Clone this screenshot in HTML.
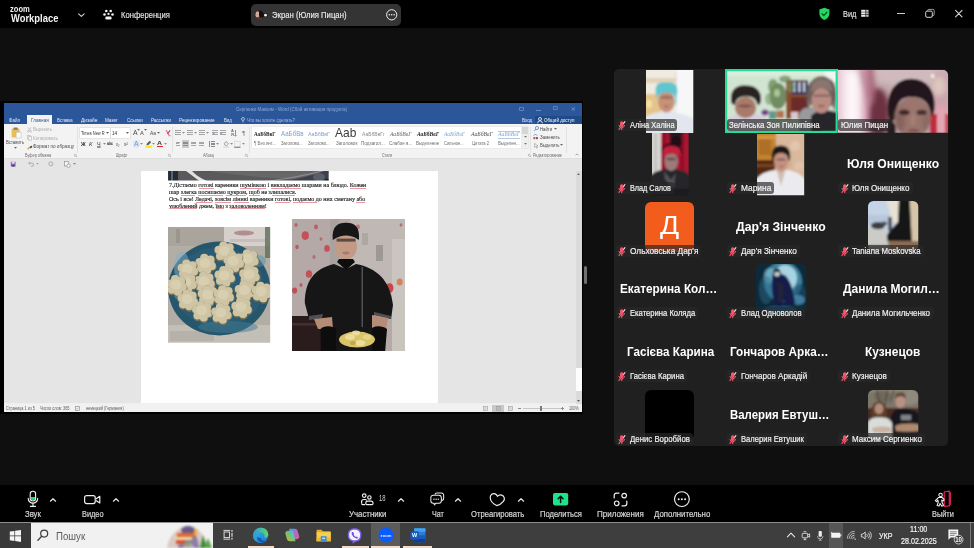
<!DOCTYPE html>
<html lang="ru">
<head>
<meta charset="utf-8">
<title>Zoom Workplace</title>
<style>
*{box-sizing:border-box;margin:0;padding:0}
html,body{width:974px;height:548px;overflow:hidden;background:#0f0f0f;font-family:"Liberation Sans","DejaVu Sans",sans-serif;color:#fff}
#root{position:relative;width:974px;height:548px;overflow:hidden;background:#0f0f0f;will-change:transform;filter:blur(.3px)}
.b{position:absolute;display:block}
svg.b{overflow:visible}
.x{position:absolute;white-space:nowrap;transform-origin:0 50%;display:block}
</style>
</head>
<body>
<div id="root">
<!-- top bar -->
<div class="b" style="left:0px;top:0px;width:974px;height:28px;background:#000;"></div>
<span class="x" style="left:10.2px;top:5px;font-size:9px;line-height:9px;color:#f2f2f2;font-weight:bold;transform:translateY(0.1px) rotate(.02deg) scaleX(0.84);">zoom</span>
<span class="x" style="left:10.5px;top:14px;font-size:10px;line-height:10px;color:#f4f4f4;font-weight:bold;transform:rotate(.02deg) scaleX(0.94);">Workplace</span>
<svg class="b" style="left:77px;top:11px" width="9" height="8" viewBox="0 0 9 8"><path d="M1.6 2.8 L4.4 5.4 L7.2 2.8" fill="none" stroke="#cfcfcf" stroke-width="1.1" stroke-linecap="round" stroke-linejoin="round"/></svg>
<svg class="b" style="left:102px;top:8px" width="14" height="13" viewBox="0 0 14 13"><g fill="#f2f2f2"><circle cx="4.3" cy="3" r="1.3"/><circle cx="8.7" cy="3" r="1.3"/><circle cx="2.5" cy="6.5" r="1.3"/><circle cx="10.5" cy="6.5" r="1.3"/><circle cx="6.5" cy="5.9" r="1.15"/><rect x="3.3" y="8.6" width="6.3" height="3" rx="1.4"/></g></svg>
<span class="x" style="left:120.6px;top:11px;font-size:9.2px;line-height:9.2px;color:#e4e4e4;transform:translateY(0.4px) rotate(.02deg) scaleX(0.83);-webkit-text-stroke:.15px #e4e4e4;">Конференция</span>
<div class="b" style="left:251px;top:4px;width:150px;height:22px;background:#343434;border-radius:5px;"></div>
<svg class="b" style="left:254px;top:9px" width="16" height="12" viewBox="0 0 16 12"><defs><clipPath id="avc"><circle cx="5.4" cy="6" r="4.5"/></clipPath></defs><g clip-path="url(#avc)" filter="url(#bl2)"><rect width="11" height="12" fill="#2a1a1c"/><ellipse cx="3.6" cy="5.4" rx="2.2" ry="3.2" fill="#d2aa9a"/><ellipse cx="7.6" cy="5" rx="2.6" ry="4.4" fill="#120c0c"/><rect x="1.6" y="8.4" width="7" height="4" fill="#5c3038"/></g><circle cx="11.5" cy="6.2" r="2.1" fill="#1a1a1a"/><circle cx="11.5" cy="6.2" r="1.4" fill="#f0f0f0"/></svg>
<span class="x" style="left:272.3px;top:11px;font-size:9.2px;line-height:9.2px;color:#ededed;transform:rotate(.02deg) scaleX(0.84);-webkit-text-stroke:.15px #ededed;">Экран (Юлия Пицан)</span>
<svg class="b" style="left:385px;top:8px" width="14" height="14" viewBox="0 0 14 14"><circle cx="6.7" cy="6.8" r="5.1" fill="none" stroke="#f0f0f0" stroke-width="1"/><g fill="#f0f0f0"><circle cx="4.3" cy="6.8" r="0.8"/><circle cx="6.7" cy="6.8" r="0.8"/><circle cx="9.1" cy="6.8" r="0.8"/></g></svg>
<svg class="b" style="left:818px;top:7px" width="13" height="14" viewBox="0 0 13 14"><path d="M6.4 0.8 L11.4 2.6 V6.6 C11.4 9.8 9.2 11.9 6.4 13 C3.6 11.9 1.4 9.8 1.4 6.6 V2.6 Z" fill="#27d660"/><path d="M4 6.8 L5.8 8.6 L8.9 5.2" fill="none" stroke="#0a5a28" stroke-width="1.3" stroke-linecap="round" stroke-linejoin="round"/></svg>
<span class="x" style="left:843.4px;top:10px;font-size:9px;line-height:9px;color:#e2e2e2;transform:rotate(.02deg) scaleX(0.82);-webkit-text-stroke:.15px #e2e2e2;">Вид</span>
<svg class="b" style="left:861px;top:9px" width="8" height="9" viewBox="0 0 8 9"><g fill="#ededed"><rect x="0.2" y="0.8" width="4.3" height="2"/><rect x="5.1" y="0.8" width="2.5" height="2" opacity=".8"/><rect x="0.2" y="3.3" width="4.3" height="2"/><rect x="5.1" y="3.3" width="2.5" height="2" opacity=".8"/><rect x="0.2" y="5.8" width="4.3" height="2"/><rect x="5.1" y="5.8" width="2.5" height="2" opacity=".8"/></g></svg>
<div class="b" style="left:897px;top:12.6px;width:7.6px;height:1.1px;background:#c9c9c9;"></div>
<svg class="b" style="left:924px;top:8px" width="12" height="11" viewBox="0 0 12 11"><rect x="3.6" y="1.4" width="6.6" height="6.2" rx="1.3" fill="none" stroke="#9a9a9a" stroke-width="1"/><rect x="1.7" y="3.1" width="6.6" height="6.2" rx="1.3" fill="#000" stroke="#d4d4d4" stroke-width="1"/></svg>
<svg class="b" style="left:953px;top:8px" width="12" height="11" viewBox="0 0 12 11"><path d="M2.6 2.4 L9 8.8 M9 2.4 L2.6 8.8" stroke="#d8d8d8" stroke-width="1.1" stroke-linecap="round"/></svg>
<div class="b" style="left:583.6px;top:266px;width:3.3px;height:17.6px;background:#707070;border-radius:1.7px;"></div>
<!-- shared screen -->
<div class="b" style="left:0px;top:101.4px;width:583.4px;height:312.8px;background:#000;"></div>
<div class="b" style="left:4.1px;top:102.8px;width:577.7px;height:309.6px;background:#e5e5e5;"></div>
<div class="b" style="left:0;top:0;width:974px;height:548px;filter:blur(.35px)">
<div class="b" style="left:4px;top:103px;width:578px;height:21.2px;background:#2b579a;"></div>
<span class="x" style="left:236.3px;top:107px;font-size:5.1px;line-height:5.1px;color:#8ba7d6;transform:translateY(0.2px) rotate(.02deg) scaleX(0.89);">Сергієнко Максим - Word (Сбой активации продукта)</span>
<svg class="b" style="left:518.6px;top:106.6px" width="5" height="4" viewBox="0 0 5 4"><rect x=".6" y=".6" width="3.8" height="2.8" fill="none" stroke="#6a8cc6" stroke-width=".8"/></svg>
<div class="b" style="left:536.4px;top:109.6px;width:4.4px;height:0.8px;background:#6a8cc6;"></div>
<svg class="b" style="left:553px;top:106.4px" width="5" height="4" viewBox="0 0 5 4"><rect x=".6" y=".6" width="3.6" height="2.8" fill="none" stroke="#6a8cc6" stroke-width=".8"/></svg>
<svg class="b" style="left:570.6px;top:106.6px" width="5" height="4" viewBox="0 0 5 4"><path d="M.6 .4 L4 3.6 M4 .4 L.6 3.6" stroke="#7898ce" stroke-width=".8"/></svg>
<div class="b" style="left:27.2px;top:115px;width:25px;height:9.4px;background:#f3f3f3;"></div>
<span class="x" style="left:9.3px;top:117px;font-size:5.2px;line-height:5.2px;color:#dfe8f6;transform:translateY(0.9px) rotate(.02deg) scaleX(0.88);">Файл</span>
<span class="x" style="left:30.8px;top:117px;font-size:5.2px;line-height:5.2px;color:#2f5a9c;transform:translateY(0.9px) rotate(.02deg) scaleX(0.9);">Главная</span>
<span class="x" style="left:56.8px;top:117px;font-size:5.2px;line-height:5.2px;color:#e6edf8;transform:translateY(0.9px) rotate(.02deg) scaleX(0.81);">Вставка</span>
<span class="x" style="left:80.7px;top:117px;font-size:5.2px;line-height:5.2px;color:#e6edf8;transform:translateY(0.9px) rotate(.02deg) scaleX(0.94);">Дизайн</span>
<span class="x" style="left:105.4px;top:117px;font-size:5.2px;line-height:5.2px;color:#e6edf8;transform:translateY(0.9px) rotate(.02deg) scaleX(0.88);">Макет</span>
<span class="x" style="left:126.8px;top:117px;font-size:5.2px;line-height:5.2px;color:#e6edf8;transform:translateY(0.9px) rotate(.02deg) scaleX(0.86);">Ссылки</span>
<span class="x" style="left:150.8px;top:117px;font-size:5.2px;line-height:5.2px;color:#e6edf8;transform:translateY(0.9px) rotate(.02deg) scaleX(0.86);">Рассылки</span>
<span class="x" style="left:179.1px;top:117px;font-size:5.2px;line-height:5.2px;color:#e6edf8;transform:translateY(0.9px) rotate(.02deg) scaleX(0.89);">Рецензирование</span>
<span class="x" style="left:223.7px;top:117px;font-size:5.2px;line-height:5.2px;color:#e6edf8;transform:translateY(0.9px) rotate(.02deg) scaleX(0.83);">Вид</span>
<svg class="b" style="left:241px;top:116.6px" width="4" height="6" viewBox="0 0 4 6"><circle cx="2" cy="2" r="1.5" fill="none" stroke="#d6e2f4" stroke-width=".7"/><path d="M1.3 4.2 h1.4 M1.5 5.2 h1" stroke="#d6e2f4" stroke-width=".6"/></svg>
<span class="x" style="left:246.8px;top:117px;font-size:5.1px;line-height:5.1px;color:#a9bfe2;transform:translateY(0.9px) rotate(.02deg) scaleX(0.85);">Что вы хотите сделать?</span>
<span class="x" style="left:521.7px;top:117px;font-size:5.1px;line-height:5.1px;color:#e6edf8;transform:translateY(0.9px) rotate(.02deg) scaleX(0.89);">Вход</span>
<div class="b" style="left:535px;top:115.6px;width:47px;height:8.6px;background:#1f4a88;"></div>
<svg class="b" style="left:537.4px;top:116.6px" width="6" height="7" viewBox="0 0 6 7"><circle cx="3" cy="2" r="1.5" fill="none" stroke="#fff" stroke-width=".8"/><path d="M.6 6.4 a2.4 2.6 0 0 1 4.8 0" fill="none" stroke="#fff" stroke-width=".8"/></svg>
<span class="x" style="left:544px;top:117px;font-size:5.1px;line-height:5.1px;color:#fff;transform:translateY(0.9px) rotate(.02deg) scaleX(0.89);">Общий доступ</span>
<div class="b" style="left:4px;top:124.2px;width:578px;height:34px;background:#f3f3f3;"></div>
<div class="b" style="left:4px;top:157.9px;width:578px;height:0.6px;background:#dedede;"></div>
<div class="b" style="left:77.4px;top:126.5px;width:0.6px;height:26px;background:#e2e2e2;"></div>
<div class="b" style="left:172.2px;top:126.5px;width:0.6px;height:26px;background:#e2e2e2;"></div>
<div class="b" style="left:249px;top:126.5px;width:0.6px;height:26px;background:#e2e2e2;"></div>
<div class="b" style="left:530px;top:126.5px;width:0.6px;height:26px;background:#e2e2e2;"></div>
<div class="b" style="left:566px;top:126.5px;width:0.6px;height:26px;background:#e2e2e2;"></div>
<svg class="b" style="left:10.6px;top:127px" width="11" height="11.4" viewBox="0 0 11 11.4"><rect x=".6" y="1.6" width="8" height="9" rx=".8" fill="#e9bd58"/><rect x="2.6" y=".4" width="4" height="2.4" rx=".6" fill="#8a7a5a"/><path d="M5.2 5.2 h5 v5.8 h-5 z" fill="#fafafa" stroke="#b8b8b8" stroke-width=".5"/></svg>
<span class="x" style="left:6px;top:139px;font-size:5.1px;line-height:5.1px;color:#4a4a4a;transform:translateY(0.8px) rotate(.02deg) scaleX(0.83);">Вставить</span>
<svg class="b" style="left:13.5px;top:147.2px" width="3" height="2" viewBox="0 0 3 2"><path d="M0 0 H3 L1.5 1.8Z" fill="#666"/></svg>
<svg class="b" style="left:26.8px;top:127.2px" width="5" height="5.4" viewBox="0 0 5 5.4"><path d="M1 .4 L3.6 4 M4 .4 L1.4 4" stroke="#b4b4b4" stroke-width=".7"/><circle cx="1.2" cy="4.4" r=".8" fill="none" stroke="#b4b4b4" stroke-width=".6"/><circle cx="3.8" cy="4.4" r=".8" fill="none" stroke="#b4b4b4" stroke-width=".6"/></svg>
<span class="x" style="left:33px;top:127px;font-size:5.1px;line-height:5.1px;color:#adadad;transform:rotate(.02deg) scaleX(0.84);">Вырезать</span>
<svg class="b" style="left:26.8px;top:135.2px" width="5" height="5.6" viewBox="0 0 5 5.6"><rect x=".4" y=".4" width="2.8" height="3.6" fill="#f6f6f6" stroke="#b4b4b4" stroke-width=".6"/><rect x="1.8" y="1.6" width="2.8" height="3.6" fill="#f6f6f6" stroke="#b4b4b4" stroke-width=".6"/></svg>
<span class="x" style="left:33px;top:135px;font-size:5.1px;line-height:5.1px;color:#adadad;transform:translateY(0.6px) rotate(.02deg) scaleX(0.91);">Копировать</span>
<svg class="b" style="left:26.6px;top:143.6px" width="6" height="6" viewBox="0 0 6 6"><path d="M.6 5.2 L2.8 3" stroke="#d9a33c" stroke-width="1.3"/><path d="M2.6 3.2 L4.2 1.6 L5.4 2.8 L3.8 4.4Z" fill="#444"/></svg>
<span class="x" style="left:33px;top:143px;font-size:5.1px;line-height:5.1px;color:#4a4a4a;transform:translateY(0.9px) rotate(.02deg) scaleX(0.9);">Формат по образцу</span>
<span class="x" style="left:25px;top:152px;font-size:5px;line-height:5px;color:#6a6a6a;transform:translateY(0.5px) rotate(.02deg) scaleX(0.77);">Буфер обмена</span>
<svg class="b" style="left:74px;top:153.6px" width="3" height="3" viewBox="0 0 3 3"><path d="M.4 .4 v2 M.4 .4 h2 M2.6 2.6 h-1.4 M2.6 2.6 v-1.4" stroke="#888" stroke-width=".5" fill="none"/></svg>
<div class="b" style="left:80px;top:128px;width:30.4px;height:9.6px;background:#fff;box-shadow:0 0 0 .5px #d6d6d6;"></div>
<span class="x" style="left:81.4px;top:130px;font-size:5.1px;line-height:5.1px;color:#333;transform:translateY(0.9px) rotate(.02deg) scaleX(0.78);">Times New R</span>
<svg class="b" style="left:106.3px;top:132px" width="3" height="2" viewBox="0 0 3 2"><path d="M0 0 H3 L1.5 1.8Z" fill="#555"/></svg>
<div class="b" style="left:110.8px;top:128px;width:19.6px;height:9.6px;background:#fff;box-shadow:0 0 0 .5px #d6d6d6;"></div>
<span class="x" style="left:112px;top:130px;font-size:5.1px;line-height:5.1px;color:#333;transform:translateY(0.9px) rotate(.02deg) scaleX(0.92);">14</span>
<svg class="b" style="left:126.3px;top:132px" width="3" height="2" viewBox="0 0 3 2"><path d="M0 0 H3 L1.5 1.8Z" fill="#555"/></svg>
<span class="x" style="left:133px;top:130px;font-size:6.4px;line-height:6.4px;color:#4a4a4a;transform:translateY(0.2px) rotate(.02deg) scaleX(1.08);">A</span>
<svg class="b" style="left:136.7px;top:128.6px" width="3" height="2" viewBox="0 0 3 2"><path d="M0 0 H3 L1.5 1.8Z" fill="#666"/></svg>
<span class="x" style="left:140.4px;top:131px;font-size:5.1px;line-height:5.1px;color:#4a4a4a;transform:translateY(0.2px) rotate(.02deg) scaleX(1.12);">A</span>
<svg class="b" style="left:143.5px;top:129px" width="3" height="2" viewBox="0 0 3 2"><path d="M0 0 H3 L1.5 1.8Z" fill="#666"/></svg>
<span class="x" style="left:150.4px;top:131px;font-size:5.8px;line-height:5.8px;color:#4a4a4a;transform:translateY(0.2px) rotate(.02deg) scaleX(0.85);">Aa</span>
<svg class="b" style="left:156.9px;top:132px" width="3" height="2" viewBox="0 0 3 2"><path d="M0 0 H3 L1.5 1.8Z" fill="#666"/></svg>
<svg class="b" style="left:164.6px;top:128.6px" width="6.4" height="8" viewBox="0 0 6.4 8"><path d="M1 1 L4.4 6.6" stroke="#e06a8a" stroke-width="1.1"/><path d="M2.4 4.8 L5.2 1.4" stroke="#c8405e" stroke-width="1.2"/><path d="M3.6 6.8 h2.4" stroke="#888" stroke-width=".6"/></svg>
<span class="x" style="left:81px;top:141px;font-size:5.8px;line-height:5.8px;color:#333;font-weight:bold;transform:translateY(0.8px) rotate(.02deg) scaleX(0.88);">Ж</span>
<span class="x" style="left:89.4px;top:141px;font-size:5.8px;line-height:5.8px;color:#333;font-style:italic;transform:translateY(0.8px) rotate(.02deg) scaleX(0.99);">К</span>
<span class="x" style="left:97.4px;top:141px;font-size:5.8px;line-height:5.8px;color:#333;transform:translateY(0.6px) rotate(.02deg) scaleX(0.93);text-decoration:underline;">Ч</span>
<svg class="b" style="left:103.1px;top:143px" width="3" height="2" viewBox="0 0 3 2"><path d="M0 0 H3 L1.5 1.8Z" fill="#8c8c8c"/></svg>
<span class="x" style="left:107.4px;top:142px;font-size:4.6px;line-height:4.6px;color:#555;transform:translateY(0.4px) rotate(.02deg) scaleX(0.76);text-decoration:line-through;">abc</span>
<span class="x" style="left:116.2px;top:141px;font-size:5px;line-height:5px;color:#444;transform:translateY(0.6px) rotate(.02deg) scaleX(0.77);">x₂</span>
<span class="x" style="left:124px;top:141px;font-size:5px;line-height:5px;color:#444;transform:translateY(0.8px) rotate(.02deg) scaleX(0.91);">x²</span>
<div class="b" style="left:132.6px;top:139.8px;width:7.6px;height:8px;background:#dbe8f8;border-radius:3px;"></div>
<span class="x" style="left:134.4px;top:141px;font-size:6.4px;line-height:6.4px;color:#6f9ad4;transform:rotate(.02deg) scaleX(1.08);">A</span>
<svg class="b" style="left:140.4px;top:143px" width="3" height="2" viewBox="0 0 3 2"><path d="M0 0 H3 L1.5 1.8Z" fill="#8c8c8c"/></svg>
<svg class="b" style="left:145px;top:140px" width="7.4" height="8" viewBox="0 0 7.4 8"><path d="M1.2 4.2 L4.8 .8 L6.2 2.2 L2.8 5.4 Z" fill="#5a5a5a"/><rect x=".2" y="5.6" width="7" height="2" fill="#ffe81a"/></svg>
<svg class="b" style="left:152.3px;top:143px" width="3" height="2" viewBox="0 0 3 2"><path d="M0 0 H3 L1.5 1.8Z" fill="#8c8c8c"/></svg>
<span class="x" style="left:157.4px;top:140px;font-size:6.2px;line-height:6.2px;color:#3a3a3a;font-weight:bold;transform:translateY(0.4px) rotate(.02deg) scaleX(1.12);">A</span>
<div class="b" style="left:156.6px;top:145.6px;width:6.6px;height:1.9px;background:#e4222e;"></div>
<svg class="b" style="left:164.2px;top:143px" width="3" height="2" viewBox="0 0 3 2"><path d="M0 0 H3 L1.5 1.8Z" fill="#8c8c8c"/></svg>
<span class="x" style="left:116.3px;top:152px;font-size:5px;line-height:5px;color:#6a6a6a;transform:translateY(0.5px) rotate(.02deg) scaleX(0.71);">Шрифт</span>
<svg class="b" style="left:168.4px;top:153.6px" width="3" height="3" viewBox="0 0 3 3"><path d="M.4 .4 v2 M.4 .4 h2 M2.6 2.6 h-1.4 M2.6 2.6 v-1.4" stroke="#888" stroke-width=".5" fill="none"/></svg>
<div class="b" style="left:176.2px;top:130.2px;width:4.4px;height:0.7px;background:#a6a6a6;"></div><div class="b" style="left:176.2px;top:132.2px;width:4.4px;height:0.7px;background:#a6a6a6;"></div><div class="b" style="left:176.2px;top:134.2px;width:4.4px;height:0.7px;background:#a6a6a6;"></div>
<div class="b" style="left:174.6px;top:130.2px;width:0.9px;height:0.8px;background:#7f9cc8;"></div><div class="b" style="left:174.6px;top:132.2px;width:0.9px;height:0.8px;background:#7f9cc8;"></div><div class="b" style="left:174.6px;top:134.2px;width:0.9px;height:0.8px;background:#7f9cc8;"></div>
<svg class="b" style="left:181.5px;top:132px" width="3" height="2" viewBox="0 0 3 2"><path d="M0 0 H3 L1.5 1.8Z" fill="#8c8c8c"/></svg>
<div class="b" style="left:188.2px;top:130.2px;width:4.4px;height:0.7px;background:#a6a6a6;"></div><div class="b" style="left:188.2px;top:132.2px;width:4.4px;height:0.7px;background:#a6a6a6;"></div><div class="b" style="left:188.2px;top:134.2px;width:4.4px;height:0.7px;background:#a6a6a6;"></div>
<div class="b" style="left:186.6px;top:130.2px;width:0.9px;height:0.8px;background:#7f9cc8;"></div><div class="b" style="left:186.6px;top:132.2px;width:0.9px;height:0.8px;background:#7f9cc8;"></div><div class="b" style="left:186.6px;top:134.2px;width:0.9px;height:0.8px;background:#7f9cc8;"></div>
<svg class="b" style="left:193.5px;top:132px" width="3" height="2" viewBox="0 0 3 2"><path d="M0 0 H3 L1.5 1.8Z" fill="#8c8c8c"/></svg>
<div class="b" style="left:200.2px;top:130.2px;width:4.4px;height:0.7px;background:#a6a6a6;"></div><div class="b" style="left:200.2px;top:132.2px;width:4.4px;height:0.7px;background:#a6a6a6;"></div><div class="b" style="left:200.2px;top:134.2px;width:4.4px;height:0.7px;background:#a6a6a6;"></div>
<div class="b" style="left:198.6px;top:130.2px;width:0.9px;height:0.8px;background:#7f9cc8;"></div><div class="b" style="left:198.6px;top:132.2px;width:0.9px;height:0.8px;background:#7f9cc8;"></div><div class="b" style="left:198.6px;top:134.2px;width:0.9px;height:0.8px;background:#7f9cc8;"></div>
<svg class="b" style="left:205.5px;top:132px" width="3" height="2" viewBox="0 0 3 2"><path d="M0 0 H3 L1.5 1.8Z" fill="#8c8c8c"/></svg>
<div class="b" style="left:212.4px;top:130.2px;width:5.4px;height:0.7px;background:#a6a6a6;"></div><div class="b" style="left:212.4px;top:132.2px;width:5.4px;height:0.7px;background:#a6a6a6;"></div><div class="b" style="left:212.4px;top:134.2px;width:5.4px;height:0.7px;background:#a6a6a6;"></div>
<svg class="b" style="left:212.2px;top:131.6px" width="3" height="3" viewBox="0 0 3 3"><path d="M2.4 .2 L.4 1.4 L2.4 2.6Z" fill="#7394c8"/></svg>
<div class="b" style="left:220.4px;top:130.2px;width:5.4px;height:0.7px;background:#a6a6a6;"></div><div class="b" style="left:220.4px;top:132.2px;width:5.4px;height:0.7px;background:#a6a6a6;"></div><div class="b" style="left:220.4px;top:134.2px;width:5.4px;height:0.7px;background:#a6a6a6;"></div>
<svg class="b" style="left:220.4px;top:131.6px" width="3" height="3" viewBox="0 0 3 3"><path d="M.4 .2 L2.4 1.4 L.4 2.6Z" fill="#7394c8"/></svg>
<span class="x" style="left:231.2px;top:130px;font-size:3.4px;line-height:3.4px;color:#6a6a6a;font-weight:bold;transform:translateY(0.2px) rotate(.02deg) scaleX(1.14);">A</span>
<span class="x" style="left:231.2px;top:134px;font-size:3.4px;line-height:3.4px;color:#6a6a6a;font-weight:bold;transform:rotate(.02deg) scaleX(1.15);">Я</span>
<div class="b" style="left:235.4px;top:129.6px;width:0.8px;height:6px;background:#7394c8;"></div>
<svg class="b" style="left:234.3px;top:134.8px" width="3" height="2" viewBox="0 0 3 2"><path d="M0 0 H3 L1.5 1.8Z" fill="#7394c8"/></svg>
<span class="x" style="left:242px;top:130px;font-size:6px;line-height:6px;color:#777;transform:rotate(.02deg) scaleX(1.12);">¶</span>
<div class="b" style="left:181.6px;top:139.5px;width:7.8px;height:8.4px;background:#c9c9c9;"></div>
<div class="b" style="left:175.8px;top:141.6px;width:4.4px;height:0.7px;background:#a6a6a6;"></div><div class="b" style="left:175.8px;top:143.4px;width:3.08px;height:0.7px;background:#a6a6a6;"></div><div class="b" style="left:175.8px;top:145.2px;width:4.4px;height:0.7px;background:#a6a6a6;"></div>
<div class="b" style="left:183.2px;top:141.6px;width:4.6px;height:0.7px;background:#8c8c8c;"></div><div class="b" style="left:183.2px;top:143.4px;width:4.6px;height:0.7px;background:#8c8c8c;"></div><div class="b" style="left:183.2px;top:145.2px;width:4.6px;height:0.7px;background:#8c8c8c;"></div>
<div class="b" style="left:191.4px;top:141.6px;width:4.4px;height:0.7px;background:#a6a6a6;"></div><div class="b" style="left:191.4px;top:143.4px;width:4.4px;height:0.7px;background:#a6a6a6;"></div><div class="b" style="left:191.4px;top:145.2px;width:4.4px;height:0.7px;background:#a6a6a6;"></div>
<div class="b" style="left:198.6px;top:141.6px;width:5.4px;height:0.7px;background:#a6a6a6;"></div><div class="b" style="left:198.6px;top:143.4px;width:5.4px;height:0.7px;background:#a6a6a6;"></div><div class="b" style="left:198.6px;top:145.2px;width:5.4px;height:0.7px;background:#a6a6a6;"></div>
<div class="b" style="left:210.6px;top:141.2px;width:4px;height:0.7px;background:#8c8c8c;"></div><div class="b" style="left:210.6px;top:142.8px;width:4px;height:0.7px;background:#8c8c8c;"></div><div class="b" style="left:210.6px;top:144.4px;width:4px;height:0.7px;background:#8c8c8c;"></div><div class="b" style="left:210.6px;top:146px;width:4px;height:0.7px;background:#8c8c8c;"></div>
<div class="b" style="left:208.8px;top:140.8px;width:0.8px;height:6px;background:#7394c8;"></div>
<svg class="b" style="left:215.5px;top:143px" width="3" height="2" viewBox="0 0 3 2"><path d="M0 0 H3 L1.5 1.8Z" fill="#8c8c8c"/></svg>
<svg class="b" style="left:223px;top:140px" width="6.4" height="8" viewBox="0 0 6.4 8"><path d="M1 4 L3.2 1.4 L5.4 4 L3.2 6 Z" fill="none" stroke="#666" stroke-width=".6"/><rect x=".2" y="6.6" width="6" height="1.2" fill="#d8d8d8"/></svg>
<svg class="b" style="left:230.1px;top:143px" width="3" height="2" viewBox="0 0 3 2"><path d="M0 0 H3 L1.5 1.8Z" fill="#8c8c8c"/></svg>
<svg class="b" style="left:234.2px;top:140.6px" width="6.6" height="6.6" viewBox="0 0 6.6 6.6"><rect x=".4" y=".4" width="5.8" height="5.8" fill="none" stroke="#aaa" stroke-width=".5" stroke-dasharray=".8 .6"/><path d="M.2 6.2 h6.2" stroke="#555" stroke-width=".8"/></svg>
<svg class="b" style="left:242.2px;top:143px" width="3" height="2" viewBox="0 0 3 2"><path d="M0 0 H3 L1.5 1.8Z" fill="#8c8c8c"/></svg>
<span class="x" style="left:203px;top:152px;font-size:5px;line-height:5px;color:#6a6a6a;transform:translateY(0.5px) rotate(.02deg) scaleX(0.78);">Абзац</span>
<svg class="b" style="left:245px;top:153.6px" width="3" height="3" viewBox="0 0 3 3"><path d="M.4 .4 v2 M.4 .4 h2 M2.6 2.6 h-1.4 M2.6 2.6 v-1.4" stroke="#888" stroke-width=".5" fill="none"/></svg>
<div class="b" style="left:251.6px;top:127.2px;width:270.8px;height:20.4px;background:#fff;box-shadow:0 0 0 .5px #e4e4e4;"></div>
<div class="b" style="left:522.4px;top:127.2px;width:5.8px;height:20.4px;background:#efefef;box-shadow:0 0 0 .5px #dcdcdc;"></div>
<div class="b" style="left:522.4px;top:127.2px;width:5.8px;height:6.6px;background:#d6d6d6;"></div>
<svg class="b" style="left:523.8px;top:136.4px" width="3" height="2" viewBox="0 0 3 2"><path d="M0 0 H3 L1.5 1.8Z" fill="#777"/></svg>
<svg class="b" style="left:523.8px;top:143px" width="3" height="2" viewBox="0 0 3 2"><path d="M0 0 H3 L1.5 1.8Z" fill="#777"/></svg>
<span class="x" style="left:254px;top:131px;font-size:6px;line-height:6px;color:#222;font-family:'Liberation Serif','DejaVu Serif',serif;font-weight:bold;transform:translateY(0.2px) rotate(.02deg) scaleX(0.85);">АаБбВвГ</span>
<span class="x" style="left:254px;top:141px;font-size:5px;line-height:5px;color:#6e6e6e;transform:translateY(0.4px) rotate(.02deg) scaleX(0.87);">¶ Без инт...</span>
<span class="x" style="left:281px;top:130px;font-size:7px;line-height:7px;color:#7fa0cc;transform:translateY(0.2px) rotate(.02deg) scaleX(0.88);">АаБбВв</span>
<span class="x" style="left:281.4px;top:141px;font-size:5px;line-height:5px;color:#6e6e6e;transform:translateY(0.4px) rotate(.02deg) scaleX(0.85);">Заголово...</span>
<span class="x" style="left:308px;top:131px;font-size:6px;line-height:6px;color:#7fa0cc;transform:translateY(0.2px) rotate(.02deg) scaleX(0.87);">АаБбВвГ</span>
<span class="x" style="left:308.4px;top:141px;font-size:5px;line-height:5px;color:#6e6e6e;transform:translateY(0.4px) rotate(.02deg) scaleX(0.85);">Заголово...</span>
<span class="x" style="left:335px;top:126px;font-size:13px;line-height:13px;color:#3a3a3a;transform:translateY(0.2px) rotate(.02deg) scaleX(0.92);">Ааb</span>
<span class="x" style="left:336px;top:141px;font-size:5px;line-height:5px;color:#6e6e6e;transform:translateY(0.4px) rotate(.02deg) scaleX(0.91);">Заголовок</span>
<span class="x" style="left:362px;top:132px;font-size:5.4px;line-height:5.4px;color:#8a8a8a;transform:translateY(0.2px) rotate(.02deg) scaleX(0.93);">АаБбВвГг</span>
<span class="x" style="left:361px;top:141px;font-size:5px;line-height:5px;color:#6e6e6e;transform:translateY(0.4px) rotate(.02deg) scaleX(0.93);">Подзагол...</span>
<span class="x" style="left:389.5px;top:131px;font-size:6px;line-height:6px;color:#666;font-family:'Liberation Serif','DejaVu Serif',serif;font-style:italic;transform:translateY(0.2px) rotate(.02deg) scaleX(0.94);">АаБбВвГ</span>
<span class="x" style="left:389px;top:141px;font-size:5px;line-height:5px;color:#6e6e6e;transform:translateY(0.4px) rotate(.02deg) scaleX(0.89);">Слабое в...</span>
<span class="x" style="left:416.5px;top:131px;font-size:6px;line-height:6px;color:#222;font-family:'Liberation Serif','DejaVu Serif',serif;font-weight:bold;font-style:italic;transform:translateY(0.2px) rotate(.02deg) scaleX(0.92);">АаБбВвГ</span>
<span class="x" style="left:416px;top:141px;font-size:5px;line-height:5px;color:#6e6e6e;transform:translateY(0.4px) rotate(.02deg) scaleX(0.87);">Выделение</span>
<span class="x" style="left:443.5px;top:131px;font-size:6px;line-height:6px;color:#86a8d6;font-family:'Liberation Serif','DejaVu Serif',serif;font-style:italic;transform:translateY(0.2px) rotate(.02deg) scaleX(0.92);">АаБбВвГ</span>
<span class="x" style="left:443.5px;top:141px;font-size:5px;line-height:5px;color:#6e6e6e;transform:translateY(0.4px) rotate(.02deg) scaleX(0.8);">Сильное...</span>
<span class="x" style="left:470.5px;top:131px;font-size:6px;line-height:6px;color:#555;font-family:'Liberation Serif','DejaVu Serif',serif;font-style:italic;transform:translateY(0.2px) rotate(.02deg) scaleX(0.96);">АаБбВвГ</span>
<span class="x" style="left:472px;top:141px;font-size:5px;line-height:5px;color:#6e6e6e;transform:translateY(0.4px) rotate(.02deg) scaleX(0.83);">Цитата 2</span>
<span class="x" style="left:497.5px;top:131px;font-size:6px;line-height:6px;color:#86a8d6;font-family:'Liberation Serif','DejaVu Serif',serif;font-style:italic;transform:translateY(0.2px) rotate(.02deg) scaleX(0.97);">АаБбВвГ</span>
<span class="x" style="left:498px;top:141px;font-size:5px;line-height:5px;color:#6e6e6e;transform:translateY(0.4px) rotate(.02deg) scaleX(0.86);">Выделен...</span>
<div class="b" style="left:497.5px;top:130.6px;width:22px;height:0.5px;background:#b4c8e4;"></div>
<div class="b" style="left:497.5px;top:137.6px;width:22px;height:0.5px;background:#b4c8e4;"></div>
<span class="x" style="left:381.6px;top:152px;font-size:5px;line-height:5px;color:#6a6a6a;transform:translateY(0.5px) rotate(.02deg) scaleX(0.72);">Стили</span>
<svg class="b" style="left:527.6px;top:153.6px" width="3" height="3" viewBox="0 0 3 3"><path d="M.4 .4 v2 M.4 .4 h2 M2.6 2.6 h-1.4 M2.6 2.6 v-1.4" stroke="#888" stroke-width=".5" fill="none"/></svg>
<svg class="b" style="left:533.6px;top:126.4px" width="5" height="5.4" viewBox="0 0 5 5.4"><circle cx="3" cy="2" r="1.6" fill="none" stroke="#4f78b8" stroke-width=".7"/><path d="M1.8 3.2 L.4 5" stroke="#4f78b8" stroke-width=".8"/></svg>
<span class="x" style="left:539.5px;top:127px;font-size:5.1px;line-height:5.1px;color:#4a4a4a;transform:rotate(.02deg) scaleX(0.84);">Найти</span>
<svg class="b" style="left:554.1px;top:128.2px" width="3" height="2" viewBox="0 0 3 2"><path d="M0 0 H3 L1.5 1.8Z" fill="#666"/></svg>
<svg class="b" style="left:533.4px;top:134.4px" width="5.4" height="5.6" viewBox="0 0 5.4 5.6"><path d="M.6 1.6 a2 2 0 0 1 3.6 0" fill="none" stroke="#4f78b8" stroke-width=".7"/><rect x=".4" y="3" width="2" height="2.2" fill="#777"/><rect x="3" y="3" width="2" height="2.2" fill="#c44"/></svg>
<span class="x" style="left:539.5px;top:135px;font-size:5.1px;line-height:5.1px;color:#4a4a4a;transform:translateY(0.2px) rotate(.02deg) scaleX(0.87);">Заменить</span>
<svg class="b" style="left:533.6px;top:142.6px" width="5" height="5.6" viewBox="0 0 5 5.6"><path d="M.6 .4 L.6 4.4 L1.8 3.4 L2.8 5.2 L3.4 4.8 L2.6 3.2 L4 3 Z" fill="#fff" stroke="#777" stroke-width=".5"/></svg>
<span class="x" style="left:539.5px;top:143px;font-size:5.1px;line-height:5.1px;color:#4a4a4a;transform:translateY(0.2px) rotate(.02deg) scaleX(0.83);">Выделить</span>
<svg class="b" style="left:560.1px;top:144.4px" width="3" height="2" viewBox="0 0 3 2"><path d="M0 0 H3 L1.5 1.8Z" fill="#666"/></svg>
<span class="x" style="left:533.4px;top:152px;font-size:5px;line-height:5px;color:#6a6a6a;transform:translateY(0.5px) rotate(.02deg) scaleX(0.76);">Редактирование</span>
<svg class="b" style="left:574.6px;top:153.4px" width="4" height="3" viewBox="0 0 4 3"><path d="M.6 2.4 L2 .8 L3.4 2.4" fill="none" stroke="#777" stroke-width=".6"/></svg>
<svg class="b" style="left:10px;top:161.2px" width="6.4" height="6.4" viewBox="0 0 6.4 6.4"><rect x=".8" y=".8" width="4.8" height="4.8" rx=".4" fill="#8a68b4"/><rect x="1.8" y=".8" width="2.8" height="1.8" fill="#efe6f8"/><rect x="1.8" y="3.8" width="2.8" height="1.8" fill="#5a3f88"/></svg>
<svg class="b" style="left:27.6px;top:161.4px" width="6.4" height="5.6" viewBox="0 0 6.4 5.6"><path d="M1 2.2 h3 a1.6 1.6 0 0 1 0 3.2 h-1" fill="none" stroke="#a0a0a0" stroke-width=".8"/><path d="M2.2 .8 L.6 2.2 L2.2 3.6" fill="none" stroke="#a0a0a0" stroke-width=".8"/></svg>
<svg class="b" style="left:36.1px;top:163.2px" width="3" height="2" viewBox="0 0 3 2"><path d="M0 0 H3 L1.5 1.8Z" fill="#aaa"/></svg>
<svg class="b" style="left:48px;top:161.4px" width="5.6" height="5.6" viewBox="0 0 5.6 5.6"><circle cx="2.8" cy="2.8" r="2" fill="none" stroke="#a0a0a0" stroke-width=".8"/></svg>
<svg class="b" style="left:64px;top:160.8px" width="7" height="7" viewBox="0 0 7 7"><rect x=".6" y=".6" width="3.6" height="4.4" fill="#f4f4f4" stroke="#8a8a8a" stroke-width=".6"/><circle cx="4.6" cy="4.8" r="1.7" fill="#f4f4f4" stroke="#8a8a8a" stroke-width=".6"/></svg>
<svg class="b" style="left:72.5px;top:163.2px" width="3" height="2" viewBox="0 0 3 2"><path d="M0 0 H3 L1.5 1.8Z" fill="#888"/></svg>
<div class="b" style="left:140.8px;top:171px;width:297.2px;height:233.2px;background:#fff;"></div>
<svg class="b" style="left:168.4px;top:171px" width="160.8" height="9.6" viewBox="0 0 160.8 9.6"><defs><clipPath id="pc1"><rect width="160.8" height="9.6" rx="0"/></clipPath></defs><g clip-path="url(#pc1)"><g filter="url(#bl2)"><rect x="-3" y="-3" width="170" height="16" fill="#5a5a5c"/><path d="M-3 -3 H170 V3 C120 2 60 1 20 0Z" fill="#4a4a4c"/><path d="M24 -3 C60 4 110 8 135 8 C150 6 158 2 163 -3Z" fill="#6c6c6e" opacity="0.8"/><rect x="-3" y="-3" width="13" height="16" fill="#262a34"/><rect x="3" y="-3" width="2" height="16" fill="#6a7484" opacity="0.8"/><path d="M14 -3 L34 12 H-3 V13 H48 C36 10 26 4 22 -3Z" fill="#e2e2e0"/><path d="M100 13 C120 10 140 6 160 -1 V13Z" fill="#3c4048"/><path d="M88 13 C112 9 136 5 158 -2" fill="none"/><path d="M88 11.6 C112 9 136 5 158 -1" fill="none" stroke="#a8a8a8" stroke-width="0.8" stroke-linecap="round" opacity="0.8"/><ellipse cx="151" cy="6" rx="6" ry="4" fill="#5c6674" opacity="0.8"/><rect x="157" y="8" width="4" height="3" fill="#1a1a1c"/></g></g></svg>
<svg class="b" style="left:168.4px;top:226.5px" width="102.2" height="115.8" viewBox="0 0 102.2 115.8"><defs><clipPath id="pc2"><rect width="102.2" height="115.8" rx="0"/></clipPath></defs><g clip-path="url(#pc2)"><g filter="url(#bl)"><rect x="-3" y="-3" width="110" height="124" fill="#b3aea5"/><rect x="-3" y="-3" width="60" height="22" fill="#aaa59c"/><rect x="8" y="2" width="4" height="14" fill="#8f8a84" opacity="0.6"/><rect x="56" y="-3" width="50" height="22" fill="#d6cfcb"/><ellipse cx="76" cy="6" rx="10" ry="2.4" fill="#96606a" opacity="0.6"/><rect x="62" y="12" width="36" height="3" fill="#bfb6b4" opacity="0.7"/><rect x="97" y="-3" width="8" height="34" fill="#5e6e58" opacity="0.8"/><rect x="-3" y="98" width="110" height="24" fill="#c3bfb7"/><rect x="2" y="104" width="44" height="10" fill="#aeaaa2" opacity="0.6"/><ellipse cx="51.2" cy="61.4" rx="51" ry="47" fill="#28566c"/><ellipse cx="51" cy="60" rx="45" ry="40" fill="#2d627a" opacity="0.6"/><ellipse cx="14" cy="40" rx="8" ry="15" fill="#7fb0c6" opacity="0.5"/><ellipse cx="9" cy="60" rx="4" ry="12" fill="#8ab8cc" opacity="0.4"/><ellipse cx="90" cy="34" rx="8" ry="6" fill="#5590aa" opacity="0.5"/><ellipse cx="60" cy="100" rx="30" ry="6" fill="#3f7c94" opacity="0.5"/><ellipse cx="57" cy="25.5" rx="8.24" ry="8.24" fill="#7f7452" opacity="0.9"/><ellipse cx="63.49" cy="27.51" rx="4.33" ry="4.33" fill="#7f7452" opacity="0.9"/><ellipse cx="58.51" cy="32.13" rx="4.33" ry="4.33" fill="#7f7452" opacity="0.9"/><ellipse cx="52.01" cy="30.12" rx="4.33" ry="4.33" fill="#7f7452" opacity="0.9"/><ellipse cx="50.51" cy="23.49" rx="4.33" ry="4.33" fill="#7f7452" opacity="0.9"/><ellipse cx="55.49" cy="18.87" rx="4.33" ry="4.33" fill="#7f7452" opacity="0.9"/><ellipse cx="61.99" cy="20.88" rx="4.33" ry="4.33" fill="#7f7452" opacity="0.9"/><ellipse cx="56.8" cy="24.7" rx="7.76" ry="7.76" fill="#cfc5a5"/><ellipse cx="62.92" cy="26.59" rx="4.07" ry="4.07" fill="#cfc5a5"/><ellipse cx="58.22" cy="30.94" rx="4.07" ry="4.07" fill="#cfc5a5"/><ellipse cx="52.1" cy="29.05" rx="4.07" ry="4.07" fill="#cfc5a5"/><ellipse cx="50.68" cy="22.81" rx="4.07" ry="4.07" fill="#cfc5a5"/><ellipse cx="55.38" cy="18.46" rx="4.07" ry="4.07" fill="#cfc5a5"/><ellipse cx="61.5" cy="20.35" rx="4.07" ry="4.07" fill="#cfc5a5"/><ellipse cx="56.2" cy="23.9" rx="5.4" ry="5" fill="#dad1b4" opacity="0.8"/><ellipse cx="80.6" cy="33.3" rx="8.24" ry="8.24" fill="#7f7452" opacity="0.9"/><ellipse cx="87.09" cy="35.31" rx="4.33" ry="4.33" fill="#7f7452" opacity="0.9"/><ellipse cx="82.11" cy="39.93" rx="4.33" ry="4.33" fill="#7f7452" opacity="0.9"/><ellipse cx="75.61" cy="37.92" rx="4.33" ry="4.33" fill="#7f7452" opacity="0.9"/><ellipse cx="74.11" cy="31.29" rx="4.33" ry="4.33" fill="#7f7452" opacity="0.9"/><ellipse cx="79.09" cy="26.67" rx="4.33" ry="4.33" fill="#7f7452" opacity="0.9"/><ellipse cx="85.59" cy="28.68" rx="4.33" ry="4.33" fill="#7f7452" opacity="0.9"/><ellipse cx="80.4" cy="32.5" rx="7.76" ry="7.76" fill="#cfc5a5"/><ellipse cx="86.52" cy="34.39" rx="4.07" ry="4.07" fill="#cfc5a5"/><ellipse cx="81.82" cy="38.74" rx="4.07" ry="4.07" fill="#cfc5a5"/><ellipse cx="75.7" cy="36.85" rx="4.07" ry="4.07" fill="#cfc5a5"/><ellipse cx="74.28" cy="30.61" rx="4.07" ry="4.07" fill="#cfc5a5"/><ellipse cx="78.98" cy="26.26" rx="4.07" ry="4.07" fill="#cfc5a5"/><ellipse cx="85.1" cy="28.15" rx="4.07" ry="4.07" fill="#cfc5a5"/><ellipse cx="79.8" cy="31.7" rx="5.4" ry="5" fill="#dad1b4" opacity="0.8"/><ellipse cx="66" cy="35.6" rx="8.24" ry="8.24" fill="#7f7452" opacity="0.9"/><ellipse cx="72.49" cy="37.61" rx="4.33" ry="4.33" fill="#7f7452" opacity="0.9"/><ellipse cx="67.51" cy="42.23" rx="4.33" ry="4.33" fill="#7f7452" opacity="0.9"/><ellipse cx="61.01" cy="40.22" rx="4.33" ry="4.33" fill="#7f7452" opacity="0.9"/><ellipse cx="59.51" cy="33.59" rx="4.33" ry="4.33" fill="#7f7452" opacity="0.9"/><ellipse cx="64.49" cy="28.97" rx="4.33" ry="4.33" fill="#7f7452" opacity="0.9"/><ellipse cx="70.99" cy="30.98" rx="4.33" ry="4.33" fill="#7f7452" opacity="0.9"/><ellipse cx="65.8" cy="34.8" rx="7.76" ry="7.76" fill="#cfc5a5"/><ellipse cx="71.92" cy="36.69" rx="4.07" ry="4.07" fill="#cfc5a5"/><ellipse cx="67.22" cy="41.04" rx="4.07" ry="4.07" fill="#cfc5a5"/><ellipse cx="61.1" cy="39.15" rx="4.07" ry="4.07" fill="#cfc5a5"/><ellipse cx="59.68" cy="32.91" rx="4.07" ry="4.07" fill="#cfc5a5"/><ellipse cx="64.38" cy="28.56" rx="4.07" ry="4.07" fill="#cfc5a5"/><ellipse cx="70.5" cy="30.45" rx="4.07" ry="4.07" fill="#cfc5a5"/><ellipse cx="65.2" cy="34" rx="5.4" ry="5" fill="#dad1b4" opacity="0.8"/><ellipse cx="37.9" cy="37.8" rx="8.24" ry="8.24" fill="#7f7452" opacity="0.9"/><ellipse cx="44.39" cy="39.81" rx="4.33" ry="4.33" fill="#7f7452" opacity="0.9"/><ellipse cx="39.41" cy="44.43" rx="4.33" ry="4.33" fill="#7f7452" opacity="0.9"/><ellipse cx="32.91" cy="42.42" rx="4.33" ry="4.33" fill="#7f7452" opacity="0.9"/><ellipse cx="31.41" cy="35.79" rx="4.33" ry="4.33" fill="#7f7452" opacity="0.9"/><ellipse cx="36.39" cy="31.17" rx="4.33" ry="4.33" fill="#7f7452" opacity="0.9"/><ellipse cx="42.89" cy="33.18" rx="4.33" ry="4.33" fill="#7f7452" opacity="0.9"/><ellipse cx="37.7" cy="37" rx="7.76" ry="7.76" fill="#cfc5a5"/><ellipse cx="43.82" cy="38.89" rx="4.07" ry="4.07" fill="#cfc5a5"/><ellipse cx="39.12" cy="43.24" rx="4.07" ry="4.07" fill="#cfc5a5"/><ellipse cx="33" cy="41.35" rx="4.07" ry="4.07" fill="#cfc5a5"/><ellipse cx="31.58" cy="35.11" rx="4.07" ry="4.07" fill="#cfc5a5"/><ellipse cx="36.28" cy="30.76" rx="4.07" ry="4.07" fill="#cfc5a5"/><ellipse cx="42.4" cy="32.65" rx="4.07" ry="4.07" fill="#cfc5a5"/><ellipse cx="37.1" cy="36.2" rx="5.4" ry="5" fill="#dad1b4" opacity="0.8"/><ellipse cx="20" cy="43.5" rx="8.24" ry="8.24" fill="#7f7452" opacity="0.9"/><ellipse cx="26.49" cy="45.51" rx="4.33" ry="4.33" fill="#7f7452" opacity="0.9"/><ellipse cx="21.51" cy="50.13" rx="4.33" ry="4.33" fill="#7f7452" opacity="0.9"/><ellipse cx="15.01" cy="48.12" rx="4.33" ry="4.33" fill="#7f7452" opacity="0.9"/><ellipse cx="13.51" cy="41.49" rx="4.33" ry="4.33" fill="#7f7452" opacity="0.9"/><ellipse cx="18.49" cy="36.87" rx="4.33" ry="4.33" fill="#7f7452" opacity="0.9"/><ellipse cx="24.99" cy="38.88" rx="4.33" ry="4.33" fill="#7f7452" opacity="0.9"/><ellipse cx="19.8" cy="42.7" rx="7.76" ry="7.76" fill="#cfc5a5"/><ellipse cx="25.92" cy="44.59" rx="4.07" ry="4.07" fill="#cfc5a5"/><ellipse cx="21.22" cy="48.94" rx="4.07" ry="4.07" fill="#cfc5a5"/><ellipse cx="15.1" cy="47.05" rx="4.07" ry="4.07" fill="#cfc5a5"/><ellipse cx="13.68" cy="40.81" rx="4.07" ry="4.07" fill="#cfc5a5"/><ellipse cx="18.38" cy="36.46" rx="4.07" ry="4.07" fill="#cfc5a5"/><ellipse cx="24.5" cy="38.35" rx="4.07" ry="4.07" fill="#cfc5a5"/><ellipse cx="19.2" cy="41.9" rx="5.4" ry="5" fill="#dad1b4" opacity="0.8"/><ellipse cx="81.7" cy="49.1" rx="8.24" ry="8.24" fill="#7f7452" opacity="0.9"/><ellipse cx="88.19" cy="51.11" rx="4.33" ry="4.33" fill="#7f7452" opacity="0.9"/><ellipse cx="83.21" cy="55.73" rx="4.33" ry="4.33" fill="#7f7452" opacity="0.9"/><ellipse cx="76.71" cy="53.72" rx="4.33" ry="4.33" fill="#7f7452" opacity="0.9"/><ellipse cx="75.21" cy="47.09" rx="4.33" ry="4.33" fill="#7f7452" opacity="0.9"/><ellipse cx="80.19" cy="42.47" rx="4.33" ry="4.33" fill="#7f7452" opacity="0.9"/><ellipse cx="86.69" cy="44.48" rx="4.33" ry="4.33" fill="#7f7452" opacity="0.9"/><ellipse cx="81.5" cy="48.3" rx="7.76" ry="7.76" fill="#cfc5a5"/><ellipse cx="87.62" cy="50.19" rx="4.07" ry="4.07" fill="#cfc5a5"/><ellipse cx="82.92" cy="54.54" rx="4.07" ry="4.07" fill="#cfc5a5"/><ellipse cx="76.8" cy="52.65" rx="4.07" ry="4.07" fill="#cfc5a5"/><ellipse cx="75.38" cy="46.41" rx="4.07" ry="4.07" fill="#cfc5a5"/><ellipse cx="80.08" cy="42.06" rx="4.07" ry="4.07" fill="#cfc5a5"/><ellipse cx="86.2" cy="43.95" rx="4.07" ry="4.07" fill="#cfc5a5"/><ellipse cx="80.9" cy="47.5" rx="5.4" ry="5" fill="#dad1b4" opacity="0.8"/><ellipse cx="57" cy="50.2" rx="8.24" ry="8.24" fill="#7f7452" opacity="0.9"/><ellipse cx="63.49" cy="52.21" rx="4.33" ry="4.33" fill="#7f7452" opacity="0.9"/><ellipse cx="58.51" cy="56.83" rx="4.33" ry="4.33" fill="#7f7452" opacity="0.9"/><ellipse cx="52.01" cy="54.82" rx="4.33" ry="4.33" fill="#7f7452" opacity="0.9"/><ellipse cx="50.51" cy="48.19" rx="4.33" ry="4.33" fill="#7f7452" opacity="0.9"/><ellipse cx="55.49" cy="43.57" rx="4.33" ry="4.33" fill="#7f7452" opacity="0.9"/><ellipse cx="61.99" cy="45.58" rx="4.33" ry="4.33" fill="#7f7452" opacity="0.9"/><ellipse cx="56.8" cy="49.4" rx="7.76" ry="7.76" fill="#cfc5a5"/><ellipse cx="62.92" cy="51.29" rx="4.07" ry="4.07" fill="#cfc5a5"/><ellipse cx="58.22" cy="55.64" rx="4.07" ry="4.07" fill="#cfc5a5"/><ellipse cx="52.1" cy="53.75" rx="4.07" ry="4.07" fill="#cfc5a5"/><ellipse cx="50.68" cy="47.51" rx="4.07" ry="4.07" fill="#cfc5a5"/><ellipse cx="55.38" cy="43.16" rx="4.07" ry="4.07" fill="#cfc5a5"/><ellipse cx="61.5" cy="45.05" rx="4.07" ry="4.07" fill="#cfc5a5"/><ellipse cx="56.2" cy="48.6" rx="5.4" ry="5" fill="#dad1b4" opacity="0.8"/><ellipse cx="36.8" cy="55.8" rx="8.24" ry="8.24" fill="#7f7452" opacity="0.9"/><ellipse cx="43.29" cy="57.81" rx="4.33" ry="4.33" fill="#7f7452" opacity="0.9"/><ellipse cx="38.31" cy="62.43" rx="4.33" ry="4.33" fill="#7f7452" opacity="0.9"/><ellipse cx="31.81" cy="60.42" rx="4.33" ry="4.33" fill="#7f7452" opacity="0.9"/><ellipse cx="30.31" cy="53.79" rx="4.33" ry="4.33" fill="#7f7452" opacity="0.9"/><ellipse cx="35.29" cy="49.17" rx="4.33" ry="4.33" fill="#7f7452" opacity="0.9"/><ellipse cx="41.79" cy="51.18" rx="4.33" ry="4.33" fill="#7f7452" opacity="0.9"/><ellipse cx="36.6" cy="55" rx="7.76" ry="7.76" fill="#cfc5a5"/><ellipse cx="42.72" cy="56.89" rx="4.07" ry="4.07" fill="#cfc5a5"/><ellipse cx="38.02" cy="61.24" rx="4.07" ry="4.07" fill="#cfc5a5"/><ellipse cx="31.9" cy="59.35" rx="4.07" ry="4.07" fill="#cfc5a5"/><ellipse cx="30.48" cy="53.11" rx="4.07" ry="4.07" fill="#cfc5a5"/><ellipse cx="35.18" cy="48.76" rx="4.07" ry="4.07" fill="#cfc5a5"/><ellipse cx="41.3" cy="50.65" rx="4.07" ry="4.07" fill="#cfc5a5"/><ellipse cx="36" cy="54.2" rx="5.4" ry="5" fill="#dad1b4" opacity="0.8"/><ellipse cx="18.8" cy="56.8" rx="8.24" ry="8.24" fill="#7f7452" opacity="0.9"/><ellipse cx="25.29" cy="58.81" rx="4.33" ry="4.33" fill="#7f7452" opacity="0.9"/><ellipse cx="20.31" cy="63.43" rx="4.33" ry="4.33" fill="#7f7452" opacity="0.9"/><ellipse cx="13.81" cy="61.42" rx="4.33" ry="4.33" fill="#7f7452" opacity="0.9"/><ellipse cx="12.31" cy="54.79" rx="4.33" ry="4.33" fill="#7f7452" opacity="0.9"/><ellipse cx="17.29" cy="50.17" rx="4.33" ry="4.33" fill="#7f7452" opacity="0.9"/><ellipse cx="23.79" cy="52.18" rx="4.33" ry="4.33" fill="#7f7452" opacity="0.9"/><ellipse cx="18.6" cy="56" rx="7.76" ry="7.76" fill="#cfc5a5"/><ellipse cx="24.72" cy="57.89" rx="4.07" ry="4.07" fill="#cfc5a5"/><ellipse cx="20.02" cy="62.24" rx="4.07" ry="4.07" fill="#cfc5a5"/><ellipse cx="13.9" cy="60.35" rx="4.07" ry="4.07" fill="#cfc5a5"/><ellipse cx="12.48" cy="54.11" rx="4.07" ry="4.07" fill="#cfc5a5"/><ellipse cx="17.18" cy="49.76" rx="4.07" ry="4.07" fill="#cfc5a5"/><ellipse cx="23.3" cy="51.65" rx="4.07" ry="4.07" fill="#cfc5a5"/><ellipse cx="18" cy="55.2" rx="5.4" ry="5" fill="#dad1b4" opacity="0.8"/><ellipse cx="8.7" cy="59.2" rx="8.24" ry="8.24" fill="#7f7452" opacity="0.9"/><ellipse cx="15.19" cy="61.21" rx="4.33" ry="4.33" fill="#7f7452" opacity="0.9"/><ellipse cx="10.21" cy="65.83" rx="4.33" ry="4.33" fill="#7f7452" opacity="0.9"/><ellipse cx="3.71" cy="63.82" rx="4.33" ry="4.33" fill="#7f7452" opacity="0.9"/><ellipse cx="2.21" cy="57.19" rx="4.33" ry="4.33" fill="#7f7452" opacity="0.9"/><ellipse cx="7.19" cy="52.57" rx="4.33" ry="4.33" fill="#7f7452" opacity="0.9"/><ellipse cx="13.69" cy="54.58" rx="4.33" ry="4.33" fill="#7f7452" opacity="0.9"/><ellipse cx="8.5" cy="58.4" rx="7.76" ry="7.76" fill="#cfc5a5"/><ellipse cx="14.62" cy="60.29" rx="4.07" ry="4.07" fill="#cfc5a5"/><ellipse cx="9.92" cy="64.64" rx="4.07" ry="4.07" fill="#cfc5a5"/><ellipse cx="3.8" cy="62.75" rx="4.07" ry="4.07" fill="#cfc5a5"/><ellipse cx="2.38" cy="56.51" rx="4.07" ry="4.07" fill="#cfc5a5"/><ellipse cx="7.08" cy="52.16" rx="4.07" ry="4.07" fill="#cfc5a5"/><ellipse cx="13.2" cy="54.05" rx="4.07" ry="4.07" fill="#cfc5a5"/><ellipse cx="7.9" cy="57.6" rx="5.4" ry="5" fill="#dad1b4" opacity="0.8"/><ellipse cx="77.2" cy="64.8" rx="8.24" ry="8.24" fill="#7f7452" opacity="0.9"/><ellipse cx="83.69" cy="66.81" rx="4.33" ry="4.33" fill="#7f7452" opacity="0.9"/><ellipse cx="78.71" cy="71.43" rx="4.33" ry="4.33" fill="#7f7452" opacity="0.9"/><ellipse cx="72.21" cy="69.42" rx="4.33" ry="4.33" fill="#7f7452" opacity="0.9"/><ellipse cx="70.71" cy="62.79" rx="4.33" ry="4.33" fill="#7f7452" opacity="0.9"/><ellipse cx="75.69" cy="58.17" rx="4.33" ry="4.33" fill="#7f7452" opacity="0.9"/><ellipse cx="82.19" cy="60.18" rx="4.33" ry="4.33" fill="#7f7452" opacity="0.9"/><ellipse cx="77" cy="64" rx="7.76" ry="7.76" fill="#cfc5a5"/><ellipse cx="83.12" cy="65.89" rx="4.07" ry="4.07" fill="#cfc5a5"/><ellipse cx="78.42" cy="70.24" rx="4.07" ry="4.07" fill="#cfc5a5"/><ellipse cx="72.3" cy="68.35" rx="4.07" ry="4.07" fill="#cfc5a5"/><ellipse cx="70.88" cy="62.11" rx="4.07" ry="4.07" fill="#cfc5a5"/><ellipse cx="75.58" cy="57.76" rx="4.07" ry="4.07" fill="#cfc5a5"/><ellipse cx="81.7" cy="59.65" rx="4.07" ry="4.07" fill="#cfc5a5"/><ellipse cx="76.4" cy="63.2" rx="5.4" ry="5" fill="#dad1b4" opacity="0.8"/><ellipse cx="94" cy="65.8" rx="8.24" ry="8.24" fill="#7f7452" opacity="0.9"/><ellipse cx="100.49" cy="67.81" rx="4.33" ry="4.33" fill="#7f7452" opacity="0.9"/><ellipse cx="95.51" cy="72.43" rx="4.33" ry="4.33" fill="#7f7452" opacity="0.9"/><ellipse cx="89.01" cy="70.42" rx="4.33" ry="4.33" fill="#7f7452" opacity="0.9"/><ellipse cx="87.51" cy="63.79" rx="4.33" ry="4.33" fill="#7f7452" opacity="0.9"/><ellipse cx="92.49" cy="59.17" rx="4.33" ry="4.33" fill="#7f7452" opacity="0.9"/><ellipse cx="98.99" cy="61.18" rx="4.33" ry="4.33" fill="#7f7452" opacity="0.9"/><ellipse cx="93.8" cy="65" rx="7.76" ry="7.76" fill="#cfc5a5"/><ellipse cx="99.92" cy="66.89" rx="4.07" ry="4.07" fill="#cfc5a5"/><ellipse cx="95.22" cy="71.24" rx="4.07" ry="4.07" fill="#cfc5a5"/><ellipse cx="89.1" cy="69.35" rx="4.07" ry="4.07" fill="#cfc5a5"/><ellipse cx="87.68" cy="63.11" rx="4.07" ry="4.07" fill="#cfc5a5"/><ellipse cx="92.38" cy="58.76" rx="4.07" ry="4.07" fill="#cfc5a5"/><ellipse cx="98.5" cy="60.65" rx="4.07" ry="4.07" fill="#cfc5a5"/><ellipse cx="93.2" cy="64.2" rx="5.4" ry="5" fill="#dad1b4" opacity="0.8"/><ellipse cx="40.2" cy="69.3" rx="8.24" ry="8.24" fill="#7f7452" opacity="0.9"/><ellipse cx="46.69" cy="71.31" rx="4.33" ry="4.33" fill="#7f7452" opacity="0.9"/><ellipse cx="41.71" cy="75.93" rx="4.33" ry="4.33" fill="#7f7452" opacity="0.9"/><ellipse cx="35.21" cy="73.92" rx="4.33" ry="4.33" fill="#7f7452" opacity="0.9"/><ellipse cx="33.71" cy="67.29" rx="4.33" ry="4.33" fill="#7f7452" opacity="0.9"/><ellipse cx="38.69" cy="62.67" rx="4.33" ry="4.33" fill="#7f7452" opacity="0.9"/><ellipse cx="45.19" cy="64.68" rx="4.33" ry="4.33" fill="#7f7452" opacity="0.9"/><ellipse cx="40" cy="68.5" rx="7.76" ry="7.76" fill="#cfc5a5"/><ellipse cx="46.12" cy="70.39" rx="4.07" ry="4.07" fill="#cfc5a5"/><ellipse cx="41.42" cy="74.74" rx="4.07" ry="4.07" fill="#cfc5a5"/><ellipse cx="35.3" cy="72.85" rx="4.07" ry="4.07" fill="#cfc5a5"/><ellipse cx="33.88" cy="66.61" rx="4.07" ry="4.07" fill="#cfc5a5"/><ellipse cx="38.58" cy="62.26" rx="4.07" ry="4.07" fill="#cfc5a5"/><ellipse cx="44.7" cy="64.15" rx="4.07" ry="4.07" fill="#cfc5a5"/><ellipse cx="39.4" cy="67.7" rx="5.4" ry="5" fill="#dad1b4" opacity="0.8"/><ellipse cx="55.9" cy="69.3" rx="8.24" ry="8.24" fill="#7f7452" opacity="0.9"/><ellipse cx="62.39" cy="71.31" rx="4.33" ry="4.33" fill="#7f7452" opacity="0.9"/><ellipse cx="57.41" cy="75.93" rx="4.33" ry="4.33" fill="#7f7452" opacity="0.9"/><ellipse cx="50.91" cy="73.92" rx="4.33" ry="4.33" fill="#7f7452" opacity="0.9"/><ellipse cx="49.41" cy="67.29" rx="4.33" ry="4.33" fill="#7f7452" opacity="0.9"/><ellipse cx="54.39" cy="62.67" rx="4.33" ry="4.33" fill="#7f7452" opacity="0.9"/><ellipse cx="60.89" cy="64.68" rx="4.33" ry="4.33" fill="#7f7452" opacity="0.9"/><ellipse cx="55.7" cy="68.5" rx="7.76" ry="7.76" fill="#cfc5a5"/><ellipse cx="61.82" cy="70.39" rx="4.07" ry="4.07" fill="#cfc5a5"/><ellipse cx="57.12" cy="74.74" rx="4.07" ry="4.07" fill="#cfc5a5"/><ellipse cx="51" cy="72.85" rx="4.07" ry="4.07" fill="#cfc5a5"/><ellipse cx="49.58" cy="66.61" rx="4.07" ry="4.07" fill="#cfc5a5"/><ellipse cx="54.28" cy="62.26" rx="4.07" ry="4.07" fill="#cfc5a5"/><ellipse cx="60.4" cy="64.15" rx="4.07" ry="4.07" fill="#cfc5a5"/><ellipse cx="55.1" cy="67.7" rx="5.4" ry="5" fill="#dad1b4" opacity="0.8"/><ellipse cx="20" cy="73.8" rx="8.24" ry="8.24" fill="#7f7452" opacity="0.9"/><ellipse cx="26.49" cy="75.81" rx="4.33" ry="4.33" fill="#7f7452" opacity="0.9"/><ellipse cx="21.51" cy="80.43" rx="4.33" ry="4.33" fill="#7f7452" opacity="0.9"/><ellipse cx="15.01" cy="78.42" rx="4.33" ry="4.33" fill="#7f7452" opacity="0.9"/><ellipse cx="13.51" cy="71.79" rx="4.33" ry="4.33" fill="#7f7452" opacity="0.9"/><ellipse cx="18.49" cy="67.17" rx="4.33" ry="4.33" fill="#7f7452" opacity="0.9"/><ellipse cx="24.99" cy="69.18" rx="4.33" ry="4.33" fill="#7f7452" opacity="0.9"/><ellipse cx="19.8" cy="73" rx="7.76" ry="7.76" fill="#cfc5a5"/><ellipse cx="25.92" cy="74.89" rx="4.07" ry="4.07" fill="#cfc5a5"/><ellipse cx="21.22" cy="79.24" rx="4.07" ry="4.07" fill="#cfc5a5"/><ellipse cx="15.1" cy="77.35" rx="4.07" ry="4.07" fill="#cfc5a5"/><ellipse cx="13.68" cy="71.11" rx="4.07" ry="4.07" fill="#cfc5a5"/><ellipse cx="18.38" cy="66.76" rx="4.07" ry="4.07" fill="#cfc5a5"/><ellipse cx="24.5" cy="68.65" rx="4.07" ry="4.07" fill="#cfc5a5"/><ellipse cx="19.2" cy="72.2" rx="5.4" ry="5" fill="#dad1b4" opacity="0.8"/><ellipse cx="73.8" cy="81.6" rx="8.24" ry="8.24" fill="#7f7452" opacity="0.9"/><ellipse cx="80.29" cy="83.61" rx="4.33" ry="4.33" fill="#7f7452" opacity="0.9"/><ellipse cx="75.31" cy="88.23" rx="4.33" ry="4.33" fill="#7f7452" opacity="0.9"/><ellipse cx="68.81" cy="86.22" rx="4.33" ry="4.33" fill="#7f7452" opacity="0.9"/><ellipse cx="67.31" cy="79.59" rx="4.33" ry="4.33" fill="#7f7452" opacity="0.9"/><ellipse cx="72.29" cy="74.97" rx="4.33" ry="4.33" fill="#7f7452" opacity="0.9"/><ellipse cx="78.79" cy="76.98" rx="4.33" ry="4.33" fill="#7f7452" opacity="0.9"/><ellipse cx="73.6" cy="80.8" rx="7.76" ry="7.76" fill="#cfc5a5"/><ellipse cx="79.72" cy="82.69" rx="4.07" ry="4.07" fill="#cfc5a5"/><ellipse cx="75.02" cy="87.04" rx="4.07" ry="4.07" fill="#cfc5a5"/><ellipse cx="68.9" cy="85.15" rx="4.07" ry="4.07" fill="#cfc5a5"/><ellipse cx="67.48" cy="78.91" rx="4.07" ry="4.07" fill="#cfc5a5"/><ellipse cx="72.18" cy="74.56" rx="4.07" ry="4.07" fill="#cfc5a5"/><ellipse cx="78.3" cy="76.45" rx="4.07" ry="4.07" fill="#cfc5a5"/><ellipse cx="73" cy="80" rx="5.4" ry="5" fill="#dad1b4" opacity="0.8"/><ellipse cx="34.5" cy="85" rx="8.24" ry="8.24" fill="#7f7452" opacity="0.9"/><ellipse cx="40.99" cy="87.01" rx="4.33" ry="4.33" fill="#7f7452" opacity="0.9"/><ellipse cx="36.01" cy="91.63" rx="4.33" ry="4.33" fill="#7f7452" opacity="0.9"/><ellipse cx="29.51" cy="89.62" rx="4.33" ry="4.33" fill="#7f7452" opacity="0.9"/><ellipse cx="28.01" cy="82.99" rx="4.33" ry="4.33" fill="#7f7452" opacity="0.9"/><ellipse cx="32.99" cy="78.37" rx="4.33" ry="4.33" fill="#7f7452" opacity="0.9"/><ellipse cx="39.49" cy="80.38" rx="4.33" ry="4.33" fill="#7f7452" opacity="0.9"/><ellipse cx="34.3" cy="84.2" rx="7.76" ry="7.76" fill="#cfc5a5"/><ellipse cx="40.42" cy="86.09" rx="4.07" ry="4.07" fill="#cfc5a5"/><ellipse cx="35.72" cy="90.44" rx="4.07" ry="4.07" fill="#cfc5a5"/><ellipse cx="29.6" cy="88.55" rx="4.07" ry="4.07" fill="#cfc5a5"/><ellipse cx="28.18" cy="82.31" rx="4.07" ry="4.07" fill="#cfc5a5"/><ellipse cx="32.88" cy="77.96" rx="4.07" ry="4.07" fill="#cfc5a5"/><ellipse cx="39" cy="79.85" rx="4.07" ry="4.07" fill="#cfc5a5"/><ellipse cx="33.7" cy="83.4" rx="5.4" ry="5" fill="#dad1b4" opacity="0.8"/><ellipse cx="53.6" cy="87.2" rx="8.24" ry="8.24" fill="#7f7452" opacity="0.9"/><ellipse cx="60.09" cy="89.21" rx="4.33" ry="4.33" fill="#7f7452" opacity="0.9"/><ellipse cx="55.11" cy="93.83" rx="4.33" ry="4.33" fill="#7f7452" opacity="0.9"/><ellipse cx="48.61" cy="91.82" rx="4.33" ry="4.33" fill="#7f7452" opacity="0.9"/><ellipse cx="47.11" cy="85.19" rx="4.33" ry="4.33" fill="#7f7452" opacity="0.9"/><ellipse cx="52.09" cy="80.57" rx="4.33" ry="4.33" fill="#7f7452" opacity="0.9"/><ellipse cx="58.59" cy="82.58" rx="4.33" ry="4.33" fill="#7f7452" opacity="0.9"/><ellipse cx="53.4" cy="86.4" rx="7.76" ry="7.76" fill="#cfc5a5"/><ellipse cx="59.52" cy="88.29" rx="4.07" ry="4.07" fill="#cfc5a5"/><ellipse cx="54.82" cy="92.64" rx="4.07" ry="4.07" fill="#cfc5a5"/><ellipse cx="48.7" cy="90.75" rx="4.07" ry="4.07" fill="#cfc5a5"/><ellipse cx="47.28" cy="84.51" rx="4.07" ry="4.07" fill="#cfc5a5"/><ellipse cx="51.98" cy="80.16" rx="4.07" ry="4.07" fill="#cfc5a5"/><ellipse cx="58.1" cy="82.05" rx="4.07" ry="4.07" fill="#cfc5a5"/><ellipse cx="52.8" cy="85.6" rx="5.4" ry="5" fill="#dad1b4" opacity="0.8"/></g></g></svg>
<svg class="b" style="left:292.2px;top:219px" width="113" height="132" viewBox="0 0 113 132"><defs><clipPath id="pc3"><rect width="113" height="132" rx="0"/></clipPath></defs><g clip-path="url(#pc3)"><g filter="url(#bl)"><rect x="-3" y="-3" width="120" height="140" fill="#b5a9a7"/><rect x="58" y="-3" width="60" height="80" fill="#bfb8b4"/><rect x="100" y="20" width="16" height="116" fill="#cbc6c1" opacity="0.9"/><rect x="38" y="-3" width="9" height="56" fill="#a59c98" opacity="0.6"/><rect x="84" y="26" width="7" height="16" fill="#8f8a84" opacity="0.7"/><rect x="70" y="14" width="6" height="12" fill="#a49c98" opacity="0.6"/><ellipse cx="13.3" cy="16.6" rx="3.6" ry="4.32" fill="#c8424a" opacity="0.85"/><ellipse cx="24" cy="8" rx="2" ry="2.4" fill="#c05058" opacity="0.85"/><ellipse cx="35" cy="29.4" rx="2.8" ry="3.36" fill="#c8424a" opacity="0.85"/><ellipse cx="5" cy="28" rx="1.8" ry="2.16" fill="#b85058" opacity="0.85"/><ellipse cx="17" cy="55" rx="3.2" ry="3.84" fill="#c8424a" opacity="0.85"/><ellipse cx="2.6" cy="71.5" rx="2.6" ry="3.12" fill="#c04048" opacity="0.85"/><ellipse cx="9" cy="66" rx="1.6" ry="1.92" fill="#b85058" opacity="0.85"/><ellipse cx="22" cy="38" rx="1.6" ry="1.92" fill="#a86a6a" opacity="0.85"/><ellipse cx="107.7" cy="63" rx="3" ry="3.6" fill="#d8764a" opacity="0.85"/><ellipse cx="97.5" cy="69" rx="4" ry="4.8" fill="#c8303a" opacity="0.85"/><ellipse cx="66" cy="8" rx="2" ry="2.4" fill="#c06a6a" opacity="0.85"/><ellipse cx="4" cy="6" rx="1.6" ry="1.92" fill="#b05a5a" opacity="0.85"/><ellipse cx="29" cy="20" rx="1.4" ry="1.68" fill="#b86060" opacity="0.85"/><ellipse cx="109" cy="6" rx="1.4" ry="1.68" fill="#a86a6a" opacity="0.85"/><rect x="-3" y="97" width="33" height="40" fill="#2a1a1c"/><rect x="0" y="104" width="26" height="2.6" fill="#5a3a3c" opacity="0.6"/><path d="M12.8 84 C13 62 22 50 42 45 L54 50 L64 45 C84 49 98 60 101 86 L99 100 L82 96 L82 110 L28 110 L30 98 L17 100Z" fill="#161619"/><rect x="69.6" y="48" width="1.2" height="62" fill="#74747c" opacity="0.8"/><path d="M17 97 L31 95 L30 99 L17 101Z" fill="#6a6a72" opacity="0.7"/><path d="M82 93 L99 97 L99 100 L82 96Z" fill="#6a6a72" opacity="0.7"/><path d="M22 100 L40 98 L41 110 L26 110Z" fill="#b58c74"/><path d="M80 96 L96 99 L94 110 L80 110Z" fill="#b58c74"/><path d="M28.6 110 C32 106 42 106 46.5 112 L48 134 H29Z" fill="#0c0c0e"/><path d="M77 112 C80 106 90 106 95 110 L93 134 H76Z" fill="#0c0c0e"/><rect x="44" y="108" width="36" height="26" fill="#121214"/><ellipse cx="65" cy="120.6" rx="18" ry="8" fill="#d9c468"/><ellipse cx="58" cy="118" rx="5" ry="3" fill="#efe0a0" opacity="0.9"/><ellipse cx="68" cy="124" rx="5.4" ry="3" fill="#efe0a0" opacity="0.9"/><ellipse cx="75" cy="118" rx="4.4" ry="2.6" fill="#e8d488" opacity="0.9"/><ellipse cx="64" cy="114" rx="4" ry="2.4" fill="#ece0a4" opacity="0.9"/><ellipse cx="61" cy="124" rx="3" ry="2" fill="#b89a48" opacity="0.7"/><ellipse cx="54" cy="28" rx="11" ry="12.4" fill="#c29a86"/><path d="M40.8 21 C39.6 8 45 3.8 54 3.8 C63 3.8 68 8 66.9 21 C62 17.6 58 16.6 54 16.6 C50 16.6 46 17.6 40.8 21Z" fill="#121214"/><rect x="44.6" y="19.6" width="19" height="3" fill="#3a2c2c" opacity="0.75"/><ellipse cx="54" cy="34" rx="3.4" ry="1.4" fill="#9a605a" opacity="0.6"/><path d="M45 43 L54 51 L63 43 L61 40 H47Z" fill="#0e0e10"/></g></g></svg>
<span class="x" style="left:168.5px;top:181px;font-size:6.6px;line-height:6.6px;color:#1c1c1c;font-family:'Liberation Serif','DejaVu Serif',serif;transform:translateY(0.9px) rotate(.02deg) scaleX(0.91);-webkit-text-stroke:.15px #1c1c1c;">7.Дістаємо готові вареники шумівкою і викладаємо шарами на блюдо. Кожен</span>
<span class="x" style="left:168.5px;top:189px;font-size:6.6px;line-height:6.6px;color:#1c1c1c;font-family:'Liberation Serif','DejaVu Serif',serif;transform:translateY(0.4px) rotate(.02deg) scaleX(0.91);-webkit-text-stroke:.15px #1c1c1c;">шар злегка посипаємо цукром, щоб не злипалися.</span>
<span class="x" style="left:168.5px;top:196px;font-size:6.6px;line-height:6.6px;color:#1c1c1c;font-family:'Liberation Serif','DejaVu Serif',serif;transform:translateY(0.2px) rotate(.02deg) scaleX(0.91);-webkit-text-stroke:.15px #1c1c1c;">Ось і все! Ледачі, зовсім ліниві вареники готові, подаємо до них сметану або</span>
<span class="x" style="left:168.5px;top:202px;font-size:6.6px;line-height:6.6px;color:#1c1c1c;font-family:'Liberation Serif','DejaVu Serif',serif;transform:translateY(0.8px) rotate(.02deg) scaleX(0.91);-webkit-text-stroke:.15px #1c1c1c;">улюблений джем, їмо з задоволенням!</span>
<div class="b" style="left:198.5px;top:187.5px;width:15.5px;height:0.6px;background:#e79aa4;"></div>
<div class="b" style="left:239.5px;top:187.5px;width:26px;height:0.6px;background:#e79aa4;"></div>
<div class="b" style="left:270.5px;top:187.5px;width:30px;height:0.6px;background:#e79aa4;"></div>
<div class="b" style="left:350px;top:187.5px;width:16px;height:0.6px;background:#e79aa4;"></div>
<div class="b" style="left:180.5px;top:195px;width:14.5px;height:0.6px;background:#e79aa4;"></div>
<div class="b" style="left:198px;top:195px;width:24.5px;height:0.6px;background:#e79aa4;"></div>
<div class="b" style="left:225.5px;top:195px;width:20.5px;height:0.6px;background:#e79aa4;"></div>
<div class="b" style="left:249px;top:195px;width:10.5px;height:0.6px;background:#e79aa4;"></div>
<div class="b" style="left:271.5px;top:195px;width:23.5px;height:0.6px;background:#e79aa4;"></div>
<div class="b" style="left:195.6px;top:201.8px;width:16.4px;height:0.6px;background:#e79aa4;"></div>
<div class="b" style="left:214.8px;top:201.8px;width:16.6px;height:0.6px;background:#e79aa4;"></div>
<div class="b" style="left:233.8px;top:201.8px;width:14.8px;height:0.6px;background:#e79aa4;"></div>
<div class="b" style="left:274.6px;top:201.8px;width:15.6px;height:0.6px;background:#e79aa4;"></div>
<div class="b" style="left:293px;top:201.8px;width:23.6px;height:0.6px;background:#e79aa4;"></div>
<div class="b" style="left:356px;top:201.8px;width:9px;height:0.6px;background:#e79aa4;"></div>
<div class="b" style="left:168.5px;top:208.4px;width:28.1px;height:0.6px;background:#e79aa4;"></div>
<div class="b" style="left:215.6px;top:208.4px;width:8.8px;height:0.6px;background:#e79aa4;"></div>
<div class="b" style="left:230px;top:208.4px;width:34.6px;height:0.6px;background:#e79aa4;"></div>
<div class="b" style="left:575.8px;top:171px;width:5.8px;height:233.2px;background:#dadada;"></div>
<div class="b" style="left:575.8px;top:367.8px;width:5.8px;height:23px;background:#fdfdfd;"></div>
<svg class="b" style="left:577.1px;top:400px" width="3" height="2" viewBox="0 0 3 2"><path d="M0 0 H3 L1.5 1.8Z" fill="#555"/></svg>
<svg class="b" style="left:577px;top:173px" width="3" height="2.4" viewBox="0 0 3 2.4"><path d="M0 2 H3 L1.5 .2Z" fill="#666"/></svg>
<div class="b" style="left:4px;top:404.2px;width:578px;height:8.2px;background:#f1f1f1;"></div>
<div class="b" style="left:4px;top:403.4px;width:571.8px;height:0.8px;background:#efefef;"></div>
<span class="x" style="left:6.2px;top:406px;font-size:5px;line-height:5px;color:#5c5c5c;transform:translateY(0.4px) rotate(.02deg) scaleX(0.77);">Страница 1 из 5</span>
<span class="x" style="left:40.4px;top:406px;font-size:5px;line-height:5px;color:#5c5c5c;transform:translateY(0.4px) rotate(.02deg) scaleX(0.78);">Число слов: 365</span>
<svg class="b" style="left:74.6px;top:405.6px" width="5" height="5" viewBox="0 0 5 5"><rect x=".5" y=".5" width="3.8" height="3.8" fill="none" stroke="#888" stroke-width=".6"/><path d="M1.4 2.4 l.8 .8 l1.4 -1.6" fill="none" stroke="#888" stroke-width=".5"/></svg>
<span class="x" style="left:86px;top:406px;font-size:5px;line-height:5px;color:#5c5c5c;transform:translateY(0.4px) rotate(.02deg) scaleX(0.76);">немецкий (Германия)</span>
<div class="b" style="left:492px;top:404.6px;width:12px;height:7.6px;background:#c8c8c8;"></div>
<svg class="b" style="left:483.4px;top:406px" width="5" height="5" viewBox="0 0 5 5"><rect x=".5" y=".5" width="3.8" height="3.8" fill="none" stroke="#9a9a9a" stroke-width=".6"/><path d="M1.2 1.8 h2.4 M1.2 3 h2.4" stroke="#9a9a9a" stroke-width=".5"/></svg>
<svg class="b" style="left:495.8px;top:406px" width="5" height="5" viewBox="0 0 5 5"><rect x=".5" y=".5" width="3.8" height="3.8" fill="none" stroke="#9a9a9a" stroke-width=".6"/><path d="M1.2 1.8 h2.4 M1.2 3 h2.4" stroke="#9a9a9a" stroke-width=".5"/></svg>
<svg class="b" style="left:508px;top:406px" width="5" height="5" viewBox="0 0 5 5"><rect x=".5" y=".5" width="3.8" height="3.8" fill="none" stroke="#9a9a9a" stroke-width=".6"/><path d="M1.2 1.8 h2.4 M1.2 3 h2.4" stroke="#9a9a9a" stroke-width=".5"/></svg>
<div class="b" style="left:518.2px;top:408.2px;width:2.6px;height:0.7px;background:#8a8a8a;"></div>
<div class="b" style="left:523px;top:408.3px;width:38px;height:0.5px;background:#c6c6c6;"></div>
<div class="b" style="left:540.3px;top:406px;width:1.6px;height:5px;background:#7a7a7a;"></div>
<div class="b" style="left:561.4px;top:408.2px;width:2.8px;height:0.7px;background:#8a8a8a;"></div>
<div class="b" style="left:562.45px;top:407.1px;width:0.7px;height:2.9px;background:#8a8a8a;"></div>
<span class="x" style="left:569px;top:406px;font-size:5px;line-height:5px;color:#5c5c5c;transform:translateY(0.4px) rotate(.02deg) scaleX(0.75);">100%</span>
</div>
<!-- gallery -->
<div class="b" style="left:614px;top:69px;width:334px;height:377px;background:#202020;border-radius:5px;"></div>
<svg class="b" width="0" height="0" style="left:0;top:0"><defs><filter id="bl" x="-20%" y="-20%" width="140%" height="140%"><feGaussianBlur stdDeviation="0.55"/></filter><filter id="bl3" x="-30%" y="-30%" width="160%" height="160%"><feGaussianBlur stdDeviation="2.4"/></filter><filter id="blg" x="-20%" y="-20%" width="140%" height="140%"><feGaussianBlur stdDeviation="0.95"/></filter><filter id="bl2" x="-20%" y="-20%" width="140%" height="140%"><feGaussianBlur stdDeviation="0.4"/></filter></defs></svg>
<svg class="b" style="left:645.7px;top:69.5px" width="47.3" height="62.9" viewBox="0 0 47.3 62.9"><defs><clipPath id="pc4"><rect width="47.3" height="62.9" rx="0"/></clipPath></defs><g clip-path="url(#pc4)"><g filter="url(#blg)"><rect x="-3" y="-3" width="54" height="70" fill="#efeae2"/><rect x="-3" y="8" width="36" height="5" fill="#e2d2b8"/><rect x="-3" y="24" width="18" height="24" fill="#e4c48c"/><ellipse cx="3" cy="34" rx="3" ry="4" fill="#f4e0a0"/><rect x="30.5" y="-3" width="20" height="70" fill="#f7f7f9"/><rect x="29.6" y="2" width="1.4" height="30" fill="#e0dcd8"/><path d="M-2 66 V48 C4 43 12 42 20 42 C30 42 40 44 50 50 V66Z" fill="#e2e6ee"/><ellipse cx="20.4" cy="31.5" rx="8.3" ry="11" fill="#c69278"/><ellipse cx="20.4" cy="27.4" rx="6.6" ry="1.6" fill="#7a5448" opacity="0.55"/><ellipse cx="20.6" cy="36.4" rx="3" ry="1.2" fill="#a0605a" opacity="0.6"/><path d="M9.6 22 C9 13 14 12 20.4 12.4 C27 12 32 14 31.4 22 C31 25 30.6 27 30 30 C29 25 27 22.6 20.4 22.4 C14 22.6 12 25 11 29 C10.4 27 9.8 25 9.6 22Z" fill="#5fc6cf"/><path d="M28.6 24 C31 27 31.6 32 30 36 L28.6 33Z" fill="#7fd0d6" opacity="0.8"/></g></g></svg>
<svg class="b" style="left:724.6px;top:69px" width="112.8" height="64" viewBox="0 0 112.8 64"><defs><clipPath id="pc5"><rect width="112.8" height="64" rx="0"/></clipPath></defs><g clip-path="url(#pc5)"><g filter="url(#blg)"><rect x="-3" y="-3" width="120" height="72" fill="#d0e4d1"/><rect x="-3" y="-3" width="120" height="10" fill="#dcecdc"/><rect x="100" y="-3" width="16" height="16" fill="#f2f6f2"/><rect x="61" y="11" width="22" height="39" fill="#8c4c2c"/><rect x="66" y="12" width="17" height="13.4" fill="#27325f"/><rect x="68.4" y="13" width="2" height="10" fill="#e4e4ee"/><rect x="73.4" y="13" width="2" height="10" fill="#e4e4ee"/><rect x="78.2" y="13" width="2" height="10" fill="#dcdce6"/><rect x="66" y="28" width="17" height="14" fill="#6c2c2a"/><rect x="66" y="43" width="7" height="7" fill="#d8c8d0"/><ellipse cx="53" cy="27" rx="8.6" ry="13" fill="#5f7d4f" opacity="0.85"/><ellipse cx="48" cy="17" rx="5" ry="7" fill="#6f8d5b" opacity="0.8"/><ellipse cx="60" cy="10" rx="6" ry="3.6" fill="#6f8d5b" opacity="0.75"/><ellipse cx="66" cy="18" rx="4" ry="6" fill="#7a9866" opacity="0.6"/><ellipse cx="44" cy="30" rx="4" ry="6" fill="#7a9866" opacity="0.6"/><ellipse cx="52" cy="24" rx="3" ry="4" fill="#c9d8b0" opacity="0.7"/><rect x="51.4" y="41.6" width="7.6" height="7.4" fill="#b2724e"/><ellipse cx="40" cy="43.6" rx="3.6" ry="3" fill="#7c3c8c"/><rect x="44" y="42" width="7" height="8" fill="#5f9a8c"/><path d="M2 66 V50 C8 45 16 44 24 44 C32 44 38 46 42 50 V66Z" fill="#d6d0dc"/><ellipse cx="20.6" cy="38.6" rx="10.6" ry="10.6" fill="#a97a6a"/><path d="M6 32 C5 20 12 16 21 16.4 C31 16 37 22 36 32 C35 36 33 38 32 34 C30 29 27 27.4 21 27.4 C14 27.4 11 30 10 36 C8 36 6.4 35 6 32Z" fill="#2c2420"/><ellipse cx="20" cy="37" rx="7" ry="1.4" fill="#5a3c38" opacity="0.6"/><path d="M74 66 V46 C76 40 80 38 86 38 L112 42 V66Z" fill="#9a9a9c"/><path d="M86 66 V47 C90 42 96 41 104 42 L114 44 V66Z" fill="#26262a"/><ellipse cx="96.6" cy="24" rx="14.4" ry="17" fill="#7a6a66"/><path d="M83 40 C80 30 81 18 86 12 L90 30Z" fill="#6a5a58" opacity="0.8"/><path d="M110 42 C113 30 112 16 106 10 L103 30Z" fill="#6a5a58" opacity="0.8"/><ellipse cx="96.4" cy="31.6" rx="10" ry="12.6" fill="#b98c82"/><path d="M85.6 24 C86 14 91 10.6 97 10.6 C103 10.6 107.6 14 107.6 24 C104 19.6 100 18.6 96.6 18.6 C92 18.6 88.6 20 85.6 24Z" fill="#8a7670"/><rect x="88.6" y="25.6" width="16" height="2.2" fill="#5a4650" opacity="0.55"/><ellipse cx="96.4" cy="37" rx="3.4" ry="1.4" fill="#8a5454" opacity="0.6"/></g><rect x="1.1" y="1.1" width="110.6" height="61.8" fill="none" stroke="#25dc97" stroke-width="2.2"/></g></svg>
<svg class="b" style="left:837.9px;top:69.5px" width="110.1" height="62.8" viewBox="0 0 110.1 62.8"><defs><clipPath id="pcy"><path d="M0 0 H105.1 a5 5 0 0 1 5 5 V62.8 H0Z"/></clipPath></defs><g clip-path="url(#pcy)"><g filter="url(#blg)"><rect x="-3" y="-3" width="118" height="70" fill="#c3a7ad"/><g filter="url(#bl3)"><ellipse cx="70" cy="2" rx="40" ry="14" fill="#d0babd"/><ellipse cx="40" cy="44" rx="12" ry="26" fill="#6c3142"/><ellipse cx="32" cy="14" rx="5" ry="22" fill="#a8687a"/><ellipse cx="102" cy="30" rx="10" ry="30" fill="#caa4ac"/></g><rect x="-3" y="-3" width="31" height="70" fill="#f0dde5"/><g filter="url(#bl3)"><rect x="-3" y="-3" width="4" height="70" fill="#e2b0c2"/><rect x="8" y="2" width="12" height="52" fill="#fdf6f9"/><rect x="25" y="-3" width="6" height="70" fill="#d49cb0"/><path d="M18 -3 L32 44 V-3Z" fill="#b27689" opacity="0.6"/></g><g filter="url(#bl3)"><ellipse cx="101" cy="16" rx="7" ry="10" fill="#dcc8c0"/><rect x="97" y="36" width="12" height="30" fill="#e3a5b4"/></g><ellipse cx="94.6" cy="6" rx="2" ry="2" fill="#f4ecec"/><rect x="92" y="44" width="7" height="24" fill="#c42a3c"/><rect x="107" y="44" width="6" height="24" fill="#c83444" opacity="0.8"/><path d="M50.4 46 C47 22 58 8.8 73 8.8 C88 8.8 98.6 20 96.4 40 C95.6 46 93.6 48 92.4 42 C90 31 84 27 73 27 C62 27 58.6 33 57.6 46 C56.6 52 52 54 50.4 46Z" fill="#22181a"/><ellipse cx="74.6" cy="47" rx="18" ry="20" fill="#9a766e"/><g filter="url(#bl3)"><ellipse cx="62" cy="50" rx="5" ry="12" fill="#7a5a56" opacity="0.7"/><ellipse cx="88" cy="50" rx="4" ry="12" fill="#80605a" opacity="0.6"/></g><ellipse cx="66.4" cy="42.4" rx="5.4" ry="2.8" fill="#33201f" opacity="0.85"/><ellipse cx="83.6" cy="42.4" rx="5" ry="2.6" fill="#33201f" opacity="0.8"/><ellipse cx="75" cy="50" rx="2.6" ry="5.6" fill="#ac8278" opacity="0.7"/><ellipse cx="75.6" cy="60.6" rx="5.6" ry="1.8" fill="#784846" opacity="0.7"/><path d="M49 66 V52 C51 48 55 50 57.6 56 V66Z" fill="#281a1e"/></g></g></svg>
<svg class="b" style="left:651.7px;top:132.5px" width="36.6" height="62.5" viewBox="0 0 36.6 62.5"><defs><clipPath id="pc6"><rect width="36.6" height="62.5" rx="0"/></clipPath></defs><g clip-path="url(#pc6)"><g filter="url(#blg)"><rect x="-3" y="-3" width="44" height="70" fill="#a81232"/><rect x="11" y="-3" width="3" height="44" fill="#8a0e28" opacity="0.7"/><rect x="20" y="-3" width="3" height="44" fill="#c42244" opacity="0.6"/><rect x="29" y="-3" width="3" height="44" fill="#8a0e28" opacity="0.7"/><rect x="-3" y="-3" width="12" height="46" fill="#d6d6d2"/><rect x="2" y="0" width="3" height="40" fill="#bcbcb8" opacity="0.7"/><path d="M17 -3 H30 V12 C27 16 21 15 18 10Z" fill="#2c161a"/><path d="M-3 66 V44 C2 38 10 36 19 36 C28 36 34 38 40 44 V66Z" fill="#25252a"/><path d="M12 38 L19 47 L24 40 L21 56 L13 46Z" fill="#5e5e66" opacity="0.8"/><ellipse cx="19.6" cy="17.4" rx="10.4" ry="7.4" fill="#2a1218" opacity="0.85"/><ellipse cx="24" cy="9" rx="5" ry="6" fill="#1e0e12" opacity="0.8"/><ellipse cx="19.2" cy="28.4" rx="6.8" ry="9.6" fill="#9c7c78"/><ellipse cx="19.2" cy="26" rx="5" ry="1.3" fill="#4a3034" opacity="0.7"/><path d="M10.6 21 C10 14 14 13 19.4 13 C25 13 29 14.6 28.6 21 C28 23 27.4 24 26.6 23 C24 21.4 22 21 19.4 21 C16 21 14 22 12.4 23.6 C11.4 23.6 10.8 22.6 10.6 21Z" fill="#c2203e"/><rect x="-3" y="56" width="44" height="10" fill="#17171a" opacity="0.7"/></g></g></svg>
<svg class="b" style="left:757.4px;top:133.7px" width="47.2" height="61.3" viewBox="0 0 47.2 61.3"><defs><clipPath id="pc7"><rect width="47.2" height="61.3" rx="0"/></clipPath></defs><g clip-path="url(#pc7)"><g filter="url(#blg)"><rect x="-3" y="-3" width="54" height="70" fill="#d9b89c"/><ellipse cx="38" cy="12" rx="5" ry="5" fill="#e6ccb4" opacity="0.7"/><ellipse cx="30" cy="30" rx="5" ry="5" fill="#cfa88c" opacity="0.6"/><ellipse cx="42" cy="32" rx="5" ry="5" fill="#e4c8b0" opacity="0.6"/><rect x="-3" y="-3" width="22" height="30" fill="#c28430"/><rect x="2" y="5" width="12" height="16" fill="#a86a24" opacity="0.8"/><rect x="-3" y="2" width="22" height="3" fill="#dca048" opacity="0.8"/><rect x="-3" y="26" width="21" height="22" fill="#54260f"/><rect x="-3" y="30" width="20" height="3" fill="#8a5a3a" opacity="0.6"/><path d="M-3 66 V48 C2 40 10 37 18 36 L24 40 L30 36 C38 37 45 40 50 48 V66Z" fill="#ebebef"/><path d="M20 38 L24 52 L28 38Z" fill="#c8b4ac" opacity="0.8"/><ellipse cx="24" cy="27.6" rx="7" ry="9.6" fill="#c29282"/><path d="M14.8 24 C14 15 18 11.4 24 11.4 C30 11.4 34 15 33.2 24 C32.6 27 32 28 31.4 26 C30.6 21 28.4 19 24 19 C19.6 19 17.4 21 16.6 26 C16 28 15.2 27 14.8 24Z" fill="#1e1818"/><ellipse cx="24" cy="25.6" rx="5" ry="1.2" fill="#5a3c38" opacity="0.6"/><ellipse cx="24.2" cy="32.4" rx="2.4" ry="1" fill="#9a5a58" opacity="0.6"/></g></g></svg>
<div class="b" style="left:644.7px;top:201.5px;width:49.8px;height:50px;background:#f25c1c;border-radius:6px;"></div>
<span class="x" style="left:660.3px;top:212px;font-size:26.4px;line-height:26.4px;color:#fff;transform:translateY(0.2px) rotate(.02deg) scaleX(1.07);">Д</span>
<svg class="b" style="left:867.7px;top:201.3px" width="50.3" height="50" viewBox="0 0 50.3 50"><defs><clipPath id="pc8"><rect width="50.3" height="50" rx="5.5"/></clipPath></defs><g clip-path="url(#pc8)"><g filter="url(#blg)"><rect x="-3" y="-3" width="56" height="56" fill="#c5d3e6"/><rect x="-3" y="14" width="24" height="10" fill="#b4c2d8" opacity="0.7"/><path d="M18 -3 H32 V24 L24 20Z" fill="#e9e1d1"/><rect x="42" y="-3" width="12" height="46" fill="#d5c5a9"/><path d="M31 -3 H41.6 L44 43 H17 C17 32 25 27 30 21Z" fill="#141416"/><rect x="20" y="16" width="4" height="14" fill="#3a3a44" opacity="0.8"/><rect x="-3" y="40" width="56" height="14" fill="#8a6c54"/><rect x="-3" y="40" width="24" height="14" fill="#9a9690"/><path d="M-3 44 V30 C2 24 12 24 18 30 L20 44Z" fill="#cbcbc7"/><ellipse cx="10" cy="24.6" rx="7" ry="3.6" fill="#3c3c44"/><ellipse cx="16" cy="22.4" rx="3" ry="2" fill="#4a4a52"/></g></g></svg>
<svg class="b" style="left:755.7px;top:264.3px" width="50.3" height="50" viewBox="0 0 50.3 50"><defs><clipPath id="pc9"><rect width="50.3" height="50" rx="5.5"/></clipPath></defs><g clip-path="url(#pc9)"><g filter="url(#blg)"><rect x="-3" y="-3" width="56" height="56" fill="#10293a"/><ellipse cx="27" cy="18" rx="19" ry="20" fill="#4a9ab8" opacity="0.8"/><ellipse cx="29" cy="14" rx="12" ry="13" fill="#b4dcea" opacity="0.9"/><ellipse cx="14" cy="12" rx="6" ry="8" fill="#8cc4d8" opacity="0.6"/><ellipse cx="10" cy="26" rx="7" ry="14" fill="#2a6a88" opacity="0.5"/><ellipse cx="44" cy="30" rx="6" ry="10" fill="#1c4a6a" opacity="0.6"/><ellipse cx="42" cy="36" rx="7" ry="5" fill="#5aa8d0" opacity="0.6"/><ellipse cx="24" cy="46" rx="16" ry="4" fill="#2e78a8" opacity="0.6"/><path d="M16 15 C16 9 19 7 22 8 L30 12 C35 18 38 28 39 40 L30 42 L28 36 L25 43 L18 42 C17 32 15 24 16 15Z" fill="#191c48"/><path d="M21 18 L27 20 L27 38 L22 38Z" fill="#22223a"/><ellipse cx="21" cy="9" rx="3" ry="3.4" fill="#c6cec6"/><path d="M17.4 8 C18 4 22 3.6 24 6 L24.6 10 C22 7 20 7 18 10Z" fill="#1a1a20"/></g></g></svg>
<div class="b" style="left:644.7px;top:390.4px;width:49.8px;height:50px;background:#000;border-radius:6px;"></div>
<svg class="b" style="left:867.7px;top:389.6px" width="50.3" height="50" viewBox="0 0 50.3 50"><defs><clipPath id="pc10"><rect width="50.3" height="50" rx="5.5"/></clipPath></defs><g clip-path="url(#pc10)"><g filter="url(#blg)"><rect x="-3" y="-3" width="56" height="56" fill="#7d776b"/><rect x="-3" y="-3" width="56" height="5" fill="#8c8678"/><ellipse cx="42" cy="8" rx="9" ry="7" fill="#989284" opacity="0.7"/><ellipse cx="14" cy="6" rx="8" ry="6" fill="#696353" opacity="0.7"/><path d="M8 -2 L12 14 M20 -2 L17 16 M26 0 L22 12" fill="none" stroke="#3c342c" stroke-width="1.2" stroke-linecap="round" opacity="0.7"/><rect x="-3" y="18" width="56" height="12" fill="#4c2c22"/><rect x="-3" y="28" width="56" height="28" fill="#3a302c"/><path d="M23 56 V26 C25 20 29 18.4 33 18.4 C40 18 47 20 54 26 V56Z" fill="#16181c"/><path d="M27 36 C34 33 44 33 53 35 V41 C44 42 34 42 28 41Z" fill="#b08a70"/><rect x="33" y="25" width="10" height="5" fill="#c8ccd0" opacity="0.6"/><ellipse cx="32.4" cy="11.6" rx="5" ry="6.4" fill="#b99182"/><path d="M27 9 C27 3.6 30 2.4 33 2.6 C36 2.6 38.4 4.6 37.8 9 C36 6.6 34 6 32 6.2 C30 6.4 28.4 7.4 27 9Z" fill="#5a4a3a"/><path d="M0 56 V32 C3 27.4 8 27 12 27.4 C18 27 22 29 24 33 V56Z" fill="#d9ddd9"/><path d="M4 38 C10 36 18 36 23 38 V42 C18 43 10 43 5 42Z" fill="#c4a892" opacity="0.8"/><path d="M3.6 26 C3 15 6 11.6 11 11.6 C16 11.6 19 15 18.6 26 C17 29 15 28 14 26 L8 26 C7 28 5 29 3.6 26Z" fill="#5c3c2c"/><ellipse cx="11" cy="18.6" rx="4.4" ry="5.4" fill="#b28c7a"/></g></g></svg>
<div class="b" style="left:615.6px;top:118.9px;width:61.8px;height:11.7px;background:rgba(40,40,42,.68);border-radius:3px;"></div>
<svg class="b" style="left:616.7px;top:119.6px" width="10" height="11" viewBox="0 0 10 11"><g fill="none" stroke="#f2566a" stroke-linecap="round"><rect x="3" y="1.3" width="3.5" height="5.6" rx="1.7" fill="#f2566a" stroke="none"/><path d="M1.9 5.4 a2.9 2.9 0 0 0 5.7 0" stroke-width="1"/><path d="M4.75 8.3 v1.3" stroke-width="1.1"/><path d="M6.4 3.6 L2 9.4" stroke-width="1.2"/><path d="M7.9 1.6 L6.6 3.3" stroke="#f0dada" stroke-width="1.1"/></g></svg>
<span class="x" style="left:629.6px;top:121px;font-size:9.2px;line-height:9.2px;color:#f2f2f2;transform:translateY(0.3px) rotate(.02deg) scaleX(0.81);-webkit-text-stroke:.2px #f2f2f2;">Аліна Халіна</span>
<div class="b" style="left:727px;top:118.9px;width:96.4px;height:11.7px;background:rgba(40,40,42,.68);border-radius:3px;"></div>
<span class="x" style="left:729.3px;top:121px;font-size:9.2px;line-height:9.2px;color:#f2f2f2;transform:translateY(0.3px) rotate(.02deg) scaleX(0.85);-webkit-text-stroke:.2px #f2f2f2;">Зелінська Зоя Пилипівна</span>
<div class="b" style="left:838.4px;top:118.9px;width:52.4px;height:11.7px;background:rgba(40,40,42,.68);border-radius:3px;"></div>
<span class="x" style="left:840.7px;top:121px;font-size:9.2px;line-height:9.2px;color:#f2f2f2;transform:translateY(0.3px) rotate(.02deg) scaleX(0.87);-webkit-text-stroke:.2px #f2f2f2;">Юлия Пицан</span>
<div class="b" style="left:615.6px;top:181.9px;width:58.4px;height:11.7px;background:rgba(40,40,42,.68);border-radius:3px;"></div>
<svg class="b" style="left:616.7px;top:182.6px" width="10" height="11" viewBox="0 0 10 11"><g fill="none" stroke="#f2566a" stroke-linecap="round"><rect x="3" y="1.3" width="3.5" height="5.6" rx="1.7" fill="#f2566a" stroke="none"/><path d="M1.9 5.4 a2.9 2.9 0 0 0 5.7 0" stroke-width="1"/><path d="M4.75 8.3 v1.3" stroke-width="1.1"/><path d="M6.4 3.6 L2 9.4" stroke-width="1.2"/><path d="M7.9 1.6 L6.6 3.3" stroke="#f0dada" stroke-width="1.1"/></g></svg>
<span class="x" style="left:629.6px;top:184px;font-size:9.2px;line-height:9.2px;color:#f2f2f2;transform:translateY(0.3px) rotate(.02deg) scaleX(0.79);-webkit-text-stroke:.2px #f2f2f2;">Влад Салов</span>
<div class="b" style="left:727px;top:181.9px;width:47.4px;height:11.7px;background:rgba(40,40,42,.68);border-radius:3px;"></div>
<svg class="b" style="left:728.1px;top:182.6px" width="10" height="11" viewBox="0 0 10 11"><g fill="none" stroke="#f2566a" stroke-linecap="round"><rect x="3" y="1.3" width="3.5" height="5.6" rx="1.7" fill="#f2566a" stroke="none"/><path d="M1.9 5.4 a2.9 2.9 0 0 0 5.7 0" stroke-width="1"/><path d="M4.75 8.3 v1.3" stroke-width="1.1"/><path d="M6.4 3.6 L2 9.4" stroke-width="1.2"/><path d="M7.9 1.6 L6.6 3.3" stroke="#f0dada" stroke-width="1.1"/></g></svg>
<span class="x" style="left:741px;top:184px;font-size:9.2px;line-height:9.2px;color:#f2f2f2;transform:translateY(0.3px) rotate(.02deg) scaleX(0.91);-webkit-text-stroke:.2px #f2f2f2;">Марина</span>
<span class="x" style="left:846.8px;top:158px;font-size:12px;line-height:12px;color:#fff;font-weight:bold;transform:translateY(0.3px) rotate(.02deg) scaleX(1.01);">Юля Онищенко</span>
<div class="b" style="left:838.4px;top:181.9px;width:74.8px;height:11.7px;background:rgba(40,40,42,.68);border-radius:3px;"></div>
<svg class="b" style="left:839.5px;top:182.6px" width="10" height="11" viewBox="0 0 10 11"><g fill="none" stroke="#f2566a" stroke-linecap="round"><rect x="3" y="1.3" width="3.5" height="5.6" rx="1.7" fill="#f2566a" stroke="none"/><path d="M1.9 5.4 a2.9 2.9 0 0 0 5.7 0" stroke-width="1"/><path d="M4.75 8.3 v1.3" stroke-width="1.1"/><path d="M6.4 3.6 L2 9.4" stroke-width="1.2"/><path d="M7.9 1.6 L6.6 3.3" stroke="#f0dada" stroke-width="1.1"/></g></svg>
<span class="x" style="left:852.4px;top:184px;font-size:9.2px;line-height:9.2px;color:#f2f2f2;transform:translateY(0.3px) rotate(.02deg) scaleX(0.87);-webkit-text-stroke:.2px #f2f2f2;">Юля Онищенко</span>
<div class="b" style="left:615.6px;top:244.9px;width:85.8px;height:11.7px;background:rgba(40,40,42,.68);border-radius:3px;"></div>
<svg class="b" style="left:616.7px;top:245.6px" width="10" height="11" viewBox="0 0 10 11"><g fill="none" stroke="#f2566a" stroke-linecap="round"><rect x="3" y="1.3" width="3.5" height="5.6" rx="1.7" fill="#f2566a" stroke="none"/><path d="M1.9 5.4 a2.9 2.9 0 0 0 5.7 0" stroke-width="1"/><path d="M4.75 8.3 v1.3" stroke-width="1.1"/><path d="M6.4 3.6 L2 9.4" stroke-width="1.2"/><path d="M7.9 1.6 L6.6 3.3" stroke="#f0dada" stroke-width="1.1"/></g></svg>
<span class="x" style="left:629.6px;top:247px;font-size:9.2px;line-height:9.2px;color:#f2f2f2;transform:translateY(0.3px) rotate(.02deg) scaleX(0.9);-webkit-text-stroke:.2px #f2f2f2;">Ольховська Дар'я</span>
<span class="x" style="left:735.9px;top:221px;font-size:12px;line-height:12px;color:#fff;font-weight:bold;transform:translateY(0.3px) rotate(.02deg) scaleX(1.02);">Дар'я Зінченко</span>
<div class="b" style="left:727px;top:244.9px;width:72.8px;height:11.7px;background:rgba(40,40,42,.68);border-radius:3px;"></div>
<svg class="b" style="left:728.1px;top:245.6px" width="10" height="11" viewBox="0 0 10 11"><g fill="none" stroke="#f2566a" stroke-linecap="round"><rect x="3" y="1.3" width="3.5" height="5.6" rx="1.7" fill="#f2566a" stroke="none"/><path d="M1.9 5.4 a2.9 2.9 0 0 0 5.7 0" stroke-width="1"/><path d="M4.75 8.3 v1.3" stroke-width="1.1"/><path d="M6.4 3.6 L2 9.4" stroke-width="1.2"/><path d="M7.9 1.6 L6.6 3.3" stroke="#f0dada" stroke-width="1.1"/></g></svg>
<span class="x" style="left:741px;top:247px;font-size:9.2px;line-height:9.2px;color:#f2f2f2;transform:translateY(0.3px) rotate(.02deg) scaleX(0.89);-webkit-text-stroke:.2px #f2f2f2;">Дар'я Зінченко</span>
<div class="b" style="left:838.4px;top:244.9px;width:85.7px;height:11.7px;background:rgba(40,40,42,.68);border-radius:3px;"></div>
<svg class="b" style="left:839.5px;top:245.6px" width="10" height="11" viewBox="0 0 10 11"><g fill="none" stroke="#f2566a" stroke-linecap="round"><rect x="3" y="1.3" width="3.5" height="5.6" rx="1.7" fill="#f2566a" stroke="none"/><path d="M1.9 5.4 a2.9 2.9 0 0 0 5.7 0" stroke-width="1"/><path d="M4.75 8.3 v1.3" stroke-width="1.1"/><path d="M6.4 3.6 L2 9.4" stroke-width="1.2"/><path d="M7.9 1.6 L6.6 3.3" stroke="#f0dada" stroke-width="1.1"/></g></svg>
<span class="x" style="left:852.4px;top:247px;font-size:9.2px;line-height:9.2px;color:#f2f2f2;transform:translateY(0.3px) rotate(.02deg) scaleX(0.85);-webkit-text-stroke:.2px #f2f2f2;">Taniana Moskovska</span>
<span class="x" style="left:619.6px;top:283px;font-size:12px;line-height:12px;color:#fff;font-weight:bold;transform:translateY(0.3px) rotate(.02deg) scaleX(0.98);">Екатерина  Кол…</span>
<div class="b" style="left:615.6px;top:306.9px;width:82.6px;height:11.7px;background:rgba(40,40,42,.68);border-radius:3px;"></div>
<svg class="b" style="left:616.7px;top:307.6px" width="10" height="11" viewBox="0 0 10 11"><g fill="none" stroke="#f2566a" stroke-linecap="round"><rect x="3" y="1.3" width="3.5" height="5.6" rx="1.7" fill="#f2566a" stroke="none"/><path d="M1.9 5.4 a2.9 2.9 0 0 0 5.7 0" stroke-width="1"/><path d="M4.75 8.3 v1.3" stroke-width="1.1"/><path d="M6.4 3.6 L2 9.4" stroke-width="1.2"/><path d="M7.9 1.6 L6.6 3.3" stroke="#f0dada" stroke-width="1.1"/></g></svg>
<span class="x" style="left:629.6px;top:309px;font-size:9.2px;line-height:9.2px;color:#f2f2f2;transform:translateY(0.3px) rotate(.02deg) scaleX(0.83);-webkit-text-stroke:.2px #f2f2f2;">Екатерина Коляда</span>
<div class="b" style="left:727px;top:306.9px;width:77.6px;height:11.7px;background:rgba(40,40,42,.68);border-radius:3px;"></div>
<svg class="b" style="left:728.1px;top:307.6px" width="10" height="11" viewBox="0 0 10 11"><g fill="none" stroke="#f2566a" stroke-linecap="round"><rect x="3" y="1.3" width="3.5" height="5.6" rx="1.7" fill="#f2566a" stroke="none"/><path d="M1.9 5.4 a2.9 2.9 0 0 0 5.7 0" stroke-width="1"/><path d="M4.75 8.3 v1.3" stroke-width="1.1"/><path d="M6.4 3.6 L2 9.4" stroke-width="1.2"/><path d="M7.9 1.6 L6.6 3.3" stroke="#f0dada" stroke-width="1.1"/></g></svg>
<span class="x" style="left:741px;top:309px;font-size:9.2px;line-height:9.2px;color:#f2f2f2;transform:translateY(0.3px) rotate(.02deg) scaleX(0.84);-webkit-text-stroke:.2px #f2f2f2;">Влад Одноволов</span>
<span class="x" style="left:842.8px;top:283px;font-size:12px;line-height:12px;color:#fff;font-weight:bold;transform:translateY(0.3px) rotate(.02deg);">Данила  Могил…</span>
<div class="b" style="left:838.4px;top:306.9px;width:95.5px;height:11.7px;background:rgba(40,40,42,.68);border-radius:3px;"></div>
<svg class="b" style="left:839.5px;top:307.6px" width="10" height="11" viewBox="0 0 10 11"><g fill="none" stroke="#f2566a" stroke-linecap="round"><rect x="3" y="1.3" width="3.5" height="5.6" rx="1.7" fill="#f2566a" stroke="none"/><path d="M1.9 5.4 a2.9 2.9 0 0 0 5.7 0" stroke-width="1"/><path d="M4.75 8.3 v1.3" stroke-width="1.1"/><path d="M6.4 3.6 L2 9.4" stroke-width="1.2"/><path d="M7.9 1.6 L6.6 3.3" stroke="#f0dada" stroke-width="1.1"/></g></svg>
<span class="x" style="left:852.4px;top:309px;font-size:9.2px;line-height:9.2px;color:#f2f2f2;transform:translateY(0.3px) rotate(.02deg) scaleX(0.87);-webkit-text-stroke:.2px #f2f2f2;">Данила Могильченко</span>
<span class="x" style="left:626.6px;top:346px;font-size:12px;line-height:12px;color:#fff;font-weight:bold;transform:translateY(0.3px) rotate(.02deg) scaleX(0.97);">Гасієва Карина</span>
<div class="b" style="left:615.6px;top:369.9px;width:71.5px;height:11.7px;background:rgba(40,40,42,.68);border-radius:3px;"></div>
<svg class="b" style="left:616.7px;top:370.6px" width="10" height="11" viewBox="0 0 10 11"><g fill="none" stroke="#f2566a" stroke-linecap="round"><rect x="3" y="1.3" width="3.5" height="5.6" rx="1.7" fill="#f2566a" stroke="none"/><path d="M1.9 5.4 a2.9 2.9 0 0 0 5.7 0" stroke-width="1"/><path d="M4.75 8.3 v1.3" stroke-width="1.1"/><path d="M6.4 3.6 L2 9.4" stroke-width="1.2"/><path d="M7.9 1.6 L6.6 3.3" stroke="#f0dada" stroke-width="1.1"/></g></svg>
<span class="x" style="left:629.6px;top:372px;font-size:9.2px;line-height:9.2px;color:#f2f2f2;transform:translateY(0.3px) rotate(.02deg) scaleX(0.84);-webkit-text-stroke:.2px #f2f2f2;">Гасієва Карина</span>
<span class="x" style="left:730px;top:346px;font-size:12px;line-height:12px;color:#fff;font-weight:bold;transform:translateY(0.3px) rotate(.02deg) scaleX(0.98);">Гончаров  Арка…</span>
<div class="b" style="left:727px;top:369.9px;width:83.2px;height:11.7px;background:rgba(40,40,42,.68);border-radius:3px;"></div>
<svg class="b" style="left:728.1px;top:370.6px" width="10" height="11" viewBox="0 0 10 11"><g fill="none" stroke="#f2566a" stroke-linecap="round"><rect x="3" y="1.3" width="3.5" height="5.6" rx="1.7" fill="#f2566a" stroke="none"/><path d="M1.9 5.4 a2.9 2.9 0 0 0 5.7 0" stroke-width="1"/><path d="M4.75 8.3 v1.3" stroke-width="1.1"/><path d="M6.4 3.6 L2 9.4" stroke-width="1.2"/><path d="M7.9 1.6 L6.6 3.3" stroke="#f0dada" stroke-width="1.1"/></g></svg>
<span class="x" style="left:741px;top:372px;font-size:9.2px;line-height:9.2px;color:#f2f2f2;transform:translateY(0.3px) rotate(.02deg) scaleX(0.88);-webkit-text-stroke:.2px #f2f2f2;">Гончаров Аркадій</span>
<span class="x" style="left:865px;top:346px;font-size:12px;line-height:12px;color:#fff;font-weight:bold;transform:translateY(0.3px) rotate(.02deg) scaleX(0.99);">Кузнецов</span>
<div class="b" style="left:838.4px;top:369.9px;width:51.9px;height:11.7px;background:rgba(40,40,42,.68);border-radius:3px;"></div>
<svg class="b" style="left:839.5px;top:370.6px" width="10" height="11" viewBox="0 0 10 11"><g fill="none" stroke="#f2566a" stroke-linecap="round"><rect x="3" y="1.3" width="3.5" height="5.6" rx="1.7" fill="#f2566a" stroke="none"/><path d="M1.9 5.4 a2.9 2.9 0 0 0 5.7 0" stroke-width="1"/><path d="M4.75 8.3 v1.3" stroke-width="1.1"/><path d="M6.4 3.6 L2 9.4" stroke-width="1.2"/><path d="M7.9 1.6 L6.6 3.3" stroke="#f0dada" stroke-width="1.1"/></g></svg>
<span class="x" style="left:852.4px;top:372px;font-size:9.2px;line-height:9.2px;color:#f2f2f2;transform:translateY(0.3px) rotate(.02deg) scaleX(0.88);-webkit-text-stroke:.2px #f2f2f2;">Кузнецов</span>
<div class="b" style="left:615.6px;top:432.9px;width:77.4px;height:11.7px;background:rgba(40,40,42,.68);border-radius:3px;"></div>
<svg class="b" style="left:616.7px;top:433.6px" width="10" height="11" viewBox="0 0 10 11"><g fill="none" stroke="#f2566a" stroke-linecap="round"><rect x="3" y="1.3" width="3.5" height="5.6" rx="1.7" fill="#f2566a" stroke="none"/><path d="M1.9 5.4 a2.9 2.9 0 0 0 5.7 0" stroke-width="1"/><path d="M4.75 8.3 v1.3" stroke-width="1.1"/><path d="M6.4 3.6 L2 9.4" stroke-width="1.2"/><path d="M7.9 1.6 L6.6 3.3" stroke="#f0dada" stroke-width="1.1"/></g></svg>
<span class="x" style="left:629.6px;top:435px;font-size:9.2px;line-height:9.2px;color:#f2f2f2;transform:translateY(0.3px) rotate(.02deg) scaleX(0.85);-webkit-text-stroke:.2px #f2f2f2;">Денис Воробйов</span>
<span class="x" style="left:730px;top:409px;font-size:12px;line-height:12px;color:#fff;font-weight:bold;transform:translateY(0.3px) rotate(.02deg) scaleX(0.95);">Валерия  Евтуш…</span>
<div class="b" style="left:727px;top:432.9px;width:80.2px;height:11.7px;background:rgba(40,40,42,.68);border-radius:3px;"></div>
<svg class="b" style="left:728.1px;top:433.6px" width="10" height="11" viewBox="0 0 10 11"><g fill="none" stroke="#f2566a" stroke-linecap="round"><rect x="3" y="1.3" width="3.5" height="5.6" rx="1.7" fill="#f2566a" stroke="none"/><path d="M1.9 5.4 a2.9 2.9 0 0 0 5.7 0" stroke-width="1"/><path d="M4.75 8.3 v1.3" stroke-width="1.1"/><path d="M6.4 3.6 L2 9.4" stroke-width="1.2"/><path d="M7.9 1.6 L6.6 3.3" stroke="#f0dada" stroke-width="1.1"/></g></svg>
<span class="x" style="left:741px;top:435px;font-size:9.2px;line-height:9.2px;color:#f2f2f2;transform:translateY(0.3px) rotate(.02deg) scaleX(0.83);-webkit-text-stroke:.2px #f2f2f2;">Валерия Евтушик</span>
<div class="b" style="left:838.4px;top:432.9px;width:87px;height:11.7px;background:rgba(40,40,42,.68);border-radius:3px;"></div>
<svg class="b" style="left:839.5px;top:433.6px" width="10" height="11" viewBox="0 0 10 11"><g fill="none" stroke="#f2566a" stroke-linecap="round"><rect x="3" y="1.3" width="3.5" height="5.6" rx="1.7" fill="#f2566a" stroke="none"/><path d="M1.9 5.4 a2.9 2.9 0 0 0 5.7 0" stroke-width="1"/><path d="M4.75 8.3 v1.3" stroke-width="1.1"/><path d="M6.4 3.6 L2 9.4" stroke-width="1.2"/><path d="M7.9 1.6 L6.6 3.3" stroke="#f0dada" stroke-width="1.1"/></g></svg>
<span class="x" style="left:852.4px;top:435px;font-size:9.2px;line-height:9.2px;color:#f2f2f2;transform:translateY(0.3px) rotate(.02deg) scaleX(0.87);-webkit-text-stroke:.2px #f2f2f2;">Максим Сергиенко</span>
<!-- meeting toolbar -->
<div class="b" style="left:0px;top:485px;width:974px;height:37px;background:#000;"></div>
<svg class="b" style="left:25px;top:490px" width="16" height="19" viewBox="0 0 16 19"><rect x="5.2" y="1.2" width="5.4" height="9.8" rx="2.7" fill="#000" stroke="#f0f0f0" stroke-width="1.1"/><path d="M5.8 7 h4.3 v1.3 a2.15 2.15 0 0 1 -4.3 0z" fill="#26d36b"/><path d="M3.2 8.4 a4.75 4.75 0 0 0 9.5 0" fill="none" stroke="#f0f0f0" stroke-width="1.1" stroke-linecap="round"/><path d="M7.95 13.2 v2.9 M5.4 16.4 h5.1" stroke="#f0f0f0" stroke-width="1.1" stroke-linecap="round"/></svg>
<svg class="b" style="left:49.2px;top:496.6px" width="8" height="6" viewBox="0 0 8 6"><path d="M1.4 4.2 L4 1.7 L6.6 4.2" fill="none" stroke="#e6e6e6" stroke-width="1.2" stroke-linecap="round" stroke-linejoin="round"/></svg>
<span class="x" style="left:25.4px;top:510px;font-size:8.6px;line-height:8.6px;color:#d6d6d6;transform:translateY(0.1px) rotate(.02deg) scaleX(0.9);-webkit-text-stroke:.2px #d6d6d6;">Звук</span>
<svg class="b" style="left:83px;top:493px" width="19" height="13" viewBox="0 0 19 13"><rect x="1.6" y="2.6" width="10.6" height="8" rx="2" fill="none" stroke="#f0f0f0" stroke-width="1.2"/><path d="M12.9 6 L16.8 3.3 V10 L12.9 7.4" fill="none" stroke="#f0f0f0" stroke-width="1.2" stroke-linejoin="round"/></svg>
<svg class="b" style="left:111.6px;top:496.6px" width="8" height="6" viewBox="0 0 8 6"><path d="M1.4 4.2 L4 1.7 L6.6 4.2" fill="none" stroke="#e6e6e6" stroke-width="1.2" stroke-linecap="round" stroke-linejoin="round"/></svg>
<span class="x" style="left:81.6px;top:510px;font-size:8.6px;line-height:8.6px;color:#d6d6d6;transform:translateY(0.1px) rotate(.02deg) scaleX(0.86);-webkit-text-stroke:.2px #d6d6d6;">Видео</span>
<svg class="b" style="left:360px;top:492px" width="15" height="15" viewBox="0 0 15 15"><g fill="none" stroke="#f0f0f0" stroke-width="1.15"><circle cx="4.2" cy="3.6" r="1.8"/><circle cx="9.4" cy="5.4" r="1.7"/><path d="M1.6 11.6 v-2.2 a1.9 1.9 0 0 1 1.9 -1.9 h1.6 a1.9 1.9 0 0 1 1.6 0.9"/><path d="M6.9 12.6 h5 a1.1 1.1 0 0 0 1.1 -1.1 v-0.4 a2 2 0 0 0 -2 -2 h-3.2 a2 2 0 0 0 -2 2 v0.4 a1.1 1.1 0 0 0 1.1 1.1 z M1.6 11.6 a1 1 0 0 0 1 1 h2.4"/></g></svg>
<span class="x" style="left:378.5px;top:494px;font-size:8.4px;line-height:8.4px;color:#cfcfcf;transform:translateY(0.1px) rotate(.02deg) scaleX(0.7);">18</span>
<svg class="b" style="left:396.7px;top:496.6px" width="8" height="6" viewBox="0 0 8 6"><path d="M1.4 4.2 L4 1.7 L6.6 4.2" fill="none" stroke="#e6e6e6" stroke-width="1.2" stroke-linecap="round" stroke-linejoin="round"/></svg>
<span class="x" style="left:348.7px;top:510px;font-size:8.6px;line-height:8.6px;color:#d6d6d6;transform:translateY(0.1px) rotate(.02deg) scaleX(0.91);-webkit-text-stroke:.2px #d6d6d6;">Участники</span>
<svg class="b" style="left:429px;top:491.4px" width="16.6" height="16.6" viewBox="0 0 18 18"><g fill="none" stroke="#f0f0f0" stroke-width="1.1" stroke-linejoin="round"><path d="M6.4 3.8 a2.3 2.3 0 0 1 2.2 -1.7 h4.9 a2.4 2.4 0 0 1 2.4 2.4 v3.4 a2.4 2.4 0 0 1 -2.3 2.4"/><path d="M4.6 4.6 h6.2 a2.6 2.6 0 0 1 2.6 2.6 v3.4 a2.6 2.6 0 0 1 -2.6 2.6 h-3.3 l-1.6 1.9 l-0.5 -1.9 h-0.8 a2.6 2.6 0 0 1 -2.6 -2.6 v-3.4 a2.6 2.6 0 0 1 2.6 -2.6 z" fill="#000"/></g><g fill="#f0f0f0"><circle cx="5.4" cy="9" r="0.75"/><circle cx="7.7" cy="9" r="0.75"/><circle cx="10" cy="9" r="0.75"/></g></svg>
<svg class="b" style="left:454.2px;top:496.6px" width="8" height="6" viewBox="0 0 8 6"><path d="M1.4 4.2 L4 1.7 L6.6 4.2" fill="none" stroke="#e6e6e6" stroke-width="1.2" stroke-linecap="round" stroke-linejoin="round"/></svg>
<span class="x" style="left:431.6px;top:510px;font-size:8.6px;line-height:8.6px;color:#d6d6d6;transform:translateY(0.1px) rotate(.02deg) scaleX(0.83);-webkit-text-stroke:.2px #d6d6d6;">Чат</span>
<svg class="b" style="left:488px;top:491px" width="19" height="17" viewBox="0 0 19 17"><path d="M8.6 14.6 C4.6 12.8 2.3 9.4 2.2 6.6 C2.1 3.6 4.8 1.9 7.1 2.9 C8.2 3.4 9 4.3 9.4 5.3 C10.3 4.4 11.8 3.6 13.6 4.1 C16.3 4.9 17.3 7.9 15.4 10.3 C13.8 12.3 11.2 13.9 8.6 14.6 Z" fill="none" stroke="#f0f0f0" stroke-width="1.15" stroke-linejoin="round"/></svg>
<svg class="b" style="left:517.4px;top:496.6px" width="8" height="6" viewBox="0 0 8 6"><path d="M1.4 4.2 L4 1.7 L6.6 4.2" fill="none" stroke="#e6e6e6" stroke-width="1.2" stroke-linecap="round" stroke-linejoin="round"/></svg>
<span class="x" style="left:471.4px;top:510px;font-size:8.6px;line-height:8.6px;color:#d6d6d6;transform:translateY(0.1px) rotate(.02deg) scaleX(0.89);-webkit-text-stroke:.2px #d6d6d6;">Отреагировать</span>
<svg class="b" style="left:552px;top:492px" width="17" height="14" viewBox="0 0 17 14"><rect x="1" y="1" width="15.2" height="12.4" rx="1.8" fill="#1fe28d"/><path d="M8.6 10.4 V4.4 M6.2 6.7 L8.6 4.2 L11 6.7" fill="none" stroke="#04140c" stroke-width="1.5" stroke-linecap="round" stroke-linejoin="round"/></svg>
<span class="x" style="left:539.9px;top:510px;font-size:8.6px;line-height:8.6px;color:#d6d6d6;transform:translateY(0.1px) rotate(.02deg) scaleX(0.88);-webkit-text-stroke:.2px #d6d6d6;">Поделиться</span>
<svg class="b" style="left:612px;top:491px" width="17" height="17" viewBox="0 0 17 17"><g fill="none" stroke="#f0f0f0" stroke-width="1.2" stroke-linecap="round"><path d="M2.2 7 V4.4 a2.3 2.3 0 0 1 2.3 -2.3 H7"/><path d="M14.8 10 v2.6 a2.3 2.3 0 0 1 -2.3 2.3 H10"/><circle cx="12.2" cy="4.6" r="2.3"/><circle cx="4.7" cy="12.3" r="2.3"/></g></svg>
<span class="x" style="left:597.4px;top:510px;font-size:8.6px;line-height:8.6px;color:#d6d6d6;transform:translateY(0.1px) rotate(.02deg) scaleX(0.93);-webkit-text-stroke:.2px #d6d6d6;">Приложения</span>
<svg class="b" style="left:673px;top:490px" width="18" height="18" viewBox="0 0 18 18"><circle cx="8.9" cy="9.1" r="7.4" fill="none" stroke="#f0f0f0" stroke-width="1.15"/><g fill="#f0f0f0"><circle cx="5.7" cy="9.2" r="1"/><circle cx="8.9" cy="9.2" r="1"/><circle cx="12.1" cy="9.2" r="1"/></g></svg>
<span class="x" style="left:653.5px;top:510px;font-size:8.6px;line-height:8.6px;color:#d6d6d6;transform:translateY(0.1px) rotate(.02deg) scaleX(0.91);-webkit-text-stroke:.2px #d6d6d6;">Дополнительно</span>
<svg class="b" style="left:934px;top:490px" width="19" height="18" viewBox="0 0 19 18"><path d="M10.2 2 L15.3 1.2 V15.8 L10.2 16.4 Z" fill="none" stroke="#e0245e" stroke-width="1.2" stroke-linejoin="round"/><path d="M15.3 1.2 L16.6 2.4 V14.6 L15.3 15.8" fill="none" stroke="#e0245e" stroke-width="1"/><g fill="#000" stroke="#f0f0f0" stroke-width="1.05" stroke-linejoin="round"><circle cx="6.6" cy="4.9" r="1.7"/><path d="M4.6 7.4 h3.6 l2 2.4 l-1.2 1.2 l-1.3 -1 l0.4 2.6 l1.4 2.6 l-1.7 1 l-1.7 -2.7 l-1 2.6 l-2 -0.5 l1.2 -3.6 l-0.5 -2 l-1.2 1.7 l-1.3 -1 z"/></g></svg>
<span class="x" style="left:932px;top:510px;font-size:8.6px;line-height:8.6px;color:#d6d6d6;transform:translateY(0.1px) rotate(.02deg) scaleX(0.86);-webkit-text-stroke:.2px #d6d6d6;">Выйти</span>
<!-- taskbar -->
<div class="b" style="left:0px;top:522px;width:974px;height:26px;background:#3e3e3e;"></div>
<div class="b" style="left:0px;top:522px;width:974px;height:1px;background:#8f8f8f;"></div>
<div class="b" style="left:0px;top:523px;width:31px;height:25px;background:#393939;"></div>
<svg class="b" style="left:9px;top:529px" width="13" height="14" viewBox="0 0 13 14"><g fill="#f4f4f4"><path d="M0.8 2.6 L5.4 1.9 V6.5 H0.8Z"/><path d="M6.1 1.8 L12 0.9 V6.5 H6.1Z"/><path d="M0.8 7.2 H5.4 V11.9 L0.8 11.2Z"/><path d="M6.1 7.2 H12 V12.9 L6.1 12Z"/></g></svg>
<div class="b" style="left:31px;top:523px;width:182px;height:25px;background:#f1f1f1;"></div>
<svg class="b" style="left:36px;top:528px" width="14" height="14" viewBox="0 0 14 14"><circle cx="8.2" cy="5.6" r="3.5" fill="none" stroke="#3c3c3c" stroke-width="1.2"/><path d="M5.7 8.2 L1.9 12.2" stroke="#3c3c3c" stroke-width="1.3" stroke-linecap="round"/></svg>
<span class="x" style="left:56.3px;top:532px;font-size:10.4px;line-height:10.4px;color:#5b5b5b;transform:translateY(0.1px) rotate(.02deg) scaleX(0.93);">Пошук</span>
<svg class="b" style="left:164px;top:523px;filter:blur(.9px)" width="49" height="25" viewBox="0 0 49 25"><path d="M3 25 C5 12 14 4 24 3 C33 3 40 10 44 25 Z" fill="#d9c9c2"/><path d="M14 25 C15 15 20 9 26 8 C32 9 34 16 35 25 Z" fill="#8d7fa3"/><path d="M17 6 C21 2 27 2 31 6 L30 10 L18 10 Z" fill="#6b5a86"/><rect x="13" y="10" width="18" height="4" fill="#e06a3c"/><rect x="11" y="14" width="17" height="3" fill="#f0d9a0"/><rect x="12" y="17" width="9" height="4" fill="#d8553a"/><rect x="30" y="6" width="3" height="6" fill="#e8b23c"/><path d="M36 25 L39 12 L43 25 Z" fill="#3f8a3a"/><path d="M40 25 L44 15 L48 25 Z" fill="#5aa545"/><path d="M19 25 C20 20 26 19 29 22 L31 25 Z" fill="#b7a8c6"/><circle cx="24" cy="21" r="2.2" fill="#7fae4c"/></svg>
<svg class="b" style="left:222px;top:529.4px" width="12.6" height="11.6" viewBox="0 0 15 14"><g fill="none" stroke="#ededed" stroke-width="1.05"><rect x="2.4" y="3.6" width="6.6" height="6.8"/><path d="M1.6 1.7 h8.2 M1.6 12.3 h8.2"/></g><g fill="#ededed"><rect x="11.3" y="1.2" width="1.3" height="2.2"/><rect x="11.3" y="4.6" width="1.3" height="4.8"/><rect x="11.3" y="10.6" width="1.3" height="2.2"/></g></svg>
<svg class="b" style="left:251.2px;top:525.8px;filter:blur(.35px)" width="19.2" height="18.8" viewBox="0 0 20 20"><defs><linearGradient id="eg1" x1="0" y1="0" x2="1" y2="1"><stop offset="0" stop-color="#35c1f1"/><stop offset="1" stop-color="#1f6fd0"/></linearGradient><linearGradient id="eg2" x1="0" y1="0" x2="1" y2="0"><stop offset="0" stop-color="#2a9ad8"/><stop offset="1" stop-color="#5fd66a"/></linearGradient></defs><circle cx="10" cy="10" r="8.2" fill="url(#eg1)"/><path d="M2 9.4 C3 4.4 7 1.8 10.6 1.8 C15.4 1.8 18.4 5.6 18.2 9.2 C18 11.6 16 12.6 13.6 12.4 C14.6 11.4 14.6 9.2 13 8 C10.8 6.4 6.6 6.6 4.6 9.8 C3.4 11.8 4 14.6 5.4 16.4 C3 15 1.6 12.2 2 9.4 Z" fill="url(#eg2)"/><path d="M6.2 11.4 C6 14.8 8.6 17.6 12.4 17.6 C14.4 17.6 16 16.8 17 15.6 C14.6 16.6 10.8 15.6 10 12.6 C8.4 12.8 7 12.2 6.2 11.4 Z" fill="#135aa8"/></svg>
<svg class="b" style="left:282.6px;top:526.4px;filter:blur(.4px)" width="18.6" height="18" viewBox="0 0 20 20"><defs><linearGradient id="cg1" x1="0" y1="0" x2="1" y2="1"><stop offset="0" stop-color="#3fa8f0"/><stop offset=".45" stop-color="#a86ad8"/><stop offset="1" stop-color="#f0558a"/></linearGradient><linearGradient id="cg2" x1="0" y1="1" x2="1" y2="0"><stop offset="0" stop-color="#f2b53c"/><stop offset=".5" stop-color="#6fd07a"/><stop offset="1" stop-color="#38b8e8"/></linearGradient></defs><path d="M6.4 3 H13 a3 3 0 0 1 2.9 2.2 L17.6 11 a3 3 0 0 1 -2.9 3.8 H9 Z" fill="url(#cg1)"/><path d="M13.6 17 H7 a3 3 0 0 1 -2.9 -2.2 L2.4 9 a3 3 0 0 1 2.9 -3.8 H11 Z" fill="url(#cg2)" opacity=".92"/></svg>
<svg class="b" style="left:315px;top:527.6px;filter:blur(.35px)" width="17.4" height="15.4" viewBox="0 0 20 18"><path d="M1.6 3 a1 1 0 0 1 1 -1 h4.8 l1.6 1.8 h8.4 a1 1 0 0 1 1 1 v2 H1.6 Z" fill="#e9a825"/><rect x="1.6" y="5" width="16.8" height="10.6" rx="1" fill="#f8cf4c"/><rect x="1.6" y="11.2" width="16.8" height="4.4" fill="#f0b730"/><rect x="6.6" y="9.6" width="6.8" height="6" fill="#3b8fe0"/><rect x="8.4" y="11.4" width="3.2" height="1.4" fill="#d7ecff"/></svg>
<svg class="b" style="left:346.4px;top:526.6px;filter:blur(.35px)" width="17.2" height="18" viewBox="0 0 20 21"><path d="M10 1.6 C15 1.6 18 4 18 9.4 C18 14.6 15 17 10.8 17.2 L7.8 19.8 V17 C4 16.2 2 13.8 2 9.4 C2 4 5 1.6 10 1.6 Z" fill="#7b62e0"/><path d="M10 3.2 C14 3.2 16.4 5 16.4 9.4 C16.4 13.6 14 15.6 10 15.6 C6 15.6 3.6 13.6 3.6 9.4 C3.6 5 6 3.2 10 3.2 Z" fill="#f4f0ff"/><path d="M7.2 5.8 C6.4 6.4 6.4 7.4 6.8 8.4 C7.8 10.8 9.6 12.6 12 13.4 C12.8 13.6 13.6 13.2 14 12.4 L12.6 11 L11.6 11.6 C10.4 11 9.4 10 8.8 8.8 L9.4 7.8 L8.2 5.8 Z" fill="#6a4fd4"/></svg>
<div class="b" style="left:371px;top:523px;width:29px;height:25px;background:#5b5b5b;"></div>
<svg class="b" style="left:377.2px;top:526.4px;filter:blur(.3px)" width="18" height="18" viewBox="0 0 20 20"><circle cx="10" cy="10" r="8.4" fill="#0b5cff"/><text x="10" y="11.7" text-anchor="middle" font-family="Liberation Sans, sans-serif" font-weight="bold" font-size="4.6" fill="#dfe9ff">zoom</text></svg>
<svg class="b" style="left:408.6px;top:527px;filter:blur(.35px)" width="18.6" height="16.6" viewBox="0 0 22 20"><rect x="6" y="1.6" width="13.6" height="16.8" rx="1" fill="#2b7cd3"/><rect x="6" y="1.6" width="13.6" height="4.2" fill="#41a5ee"/><rect x="6" y="10" width="13.6" height="4.2" fill="#185abd"/><rect x="6" y="14.2" width="13.6" height="4.2" fill="#103f91"/><rect x="1.6" y="5.2" width="10" height="10" rx="1" fill="#185abd"/><text x="6.6" y="12.6" text-anchor="middle" font-family="Liberation Sans, sans-serif" font-weight="bold" font-size="6.6" fill="#fff">W</text></svg>
<div class="b" style="left:248px;top:545.8px;width:26px;height:2.2px;background:#f4dcc6;"></div>
<div class="b" style="left:342.4px;top:545.8px;width:26.2px;height:2.2px;background:#f4dcc6;"></div>
<div class="b" style="left:371.3px;top:545.8px;width:29.1px;height:2.2px;background:#f4dcc6;"></div>
<div class="b" style="left:402.8px;top:545.8px;width:28.8px;height:2.2px;background:#f4dcc6;"></div>
<svg class="b" style="left:786px;top:531px" width="10" height="8" viewBox="0 0 10 8"><path d="M1.4 5.8 L5 2.2 L8.6 5.8" fill="none" stroke="#e8e8e8" stroke-width="1.1" stroke-linecap="round" stroke-linejoin="round"/></svg>
<svg class="b" style="left:801.4px;top:529.6px" width="10" height="11.6" viewBox="0 0 12 14"><g fill="none" stroke="#e4e4e4" stroke-width="1"><rect x="1.4" y="4" width="6.6" height="5.4" rx="0.8"/><path d="M8 6 L10.4 4.6 V8.8 L8 7.4"/><path d="M3 2 h3.4 M3 11.6 h3.4 M4.7 9.4 v2.2"/></g></svg>
<svg class="b" style="left:815.8px;top:529.6px" width="8.6" height="11.4" viewBox="0 0 12 16"><rect x="3.6" y="1.4" width="4.6" height="8" rx="1.4" fill="#ececec"/><path d="M2 8.6 a3.9 3.9 0 0 0 7.8 0" fill="none" stroke="#d0d0d0" stroke-width="1"/><path d="M5.9 12.4 v1.8 M3.8 14.4 h4.2" stroke="#d0d0d0" stroke-width="1"/></svg>
<div class="b" style="left:828.6px;top:523px;width:14.4px;height:25px;background:#565656;"></div>
<svg class="b" style="left:830px;top:530.8px" width="12" height="8.6" viewBox="0 0 14 10"><rect x="1.4" y="2" width="10.6" height="6" rx="0.8" fill="#f2f2f2"/><rect x="12" y="3.8" width="1.2" height="2.4" fill="#f2f2f2"/><path d="M1 1.4 l3 2" stroke="#f2f2f2" stroke-width="1"/></svg>
<svg class="b" style="left:846.4px;top:530.2px" width="11.4" height="10.6" viewBox="0 0 14 13"><g fill="none" stroke="#cfcfcf" stroke-width="1"><path d="M1.6 10.6 A9 9 0 0 1 10.6 1.6"/><path d="M3.8 10.8 A6.8 6.8 0 0 1 10.6 4"/><path d="M6 11 A4.6 4.6 0 0 1 10.6 6.4"/><path d="M8.2 11.2 A2.4 2.4 0 0 1 10.6 8.8"/></g><circle cx="11.2" cy="11.2" r="0.9" fill="#f0f0f0"/></svg>
<svg class="b" style="left:860.4px;top:530px" width="12.6" height="11" viewBox="0 0 15 13"><g fill="none" stroke="#e8e8e8" stroke-width="1" stroke-linejoin="round"><path d="M1.6 4.8 h2 l2.6 -2.4 v8.2 l-2.6 -2.4 h-2 z"/><path d="M8 4.8 a2.4 2.4 0 0 1 0 3.4"/><path d="M9.8 3.2 a4.6 4.6 0 0 1 0 6.6"/><path d="M11.6 1.8 a6.8 6.8 0 0 1 0 9.4"/></g></svg>
<span class="x" style="left:878.8px;top:531px;font-size:8.4px;line-height:8.4px;color:#f0f0f0;transform:translateY(0.6px) rotate(.02deg) scaleX(0.85);-webkit-text-stroke:.2px #f0f0f0;">УКР</span>
<span class="x" style="left:910px;top:525px;font-size:8.6px;line-height:8.6px;color:#f4f4f4;transform:translateY(0.4px) rotate(.02deg) scaleX(0.83);-webkit-text-stroke:.2px #f4f4f4;">11:00</span>
<span class="x" style="left:900.6px;top:536px;font-size:8.6px;line-height:8.6px;color:#f4f4f4;transform:translateY(0.9px) rotate(.02deg) scaleX(0.83);-webkit-text-stroke:.2px #f4f4f4;">28.02.2025</span>
<svg class="b" style="left:946px;top:527px" width="20" height="19" viewBox="0 0 20 19"><path d="M2.4 2.6 h9.8 v8 h-7.4 l-2.4 2.2 Z" fill="#f4f4f4"/><path d="M4 4.8 h6.6 M4 6.6 h6.6 M4 8.4 h4.6" stroke="#555" stroke-width="0.7"/><circle cx="12.6" cy="12.6" r="4.4" fill="#3a3a3a" stroke="#d8d8d8" stroke-width="0.9"/><text x="12.6" y="15.3" text-anchor="middle" font-family="Liberation Sans, sans-serif" font-weight="bold" font-size="7.4" fill="#fff" textLength="6.8" lengthAdjust="spacingAndGlyphs">10</text></svg>
<div class="b" style="left:970px;top:523px;width:1px;height:25px;background:#7a7a7a;"></div>
</div>
</body>
</html>
